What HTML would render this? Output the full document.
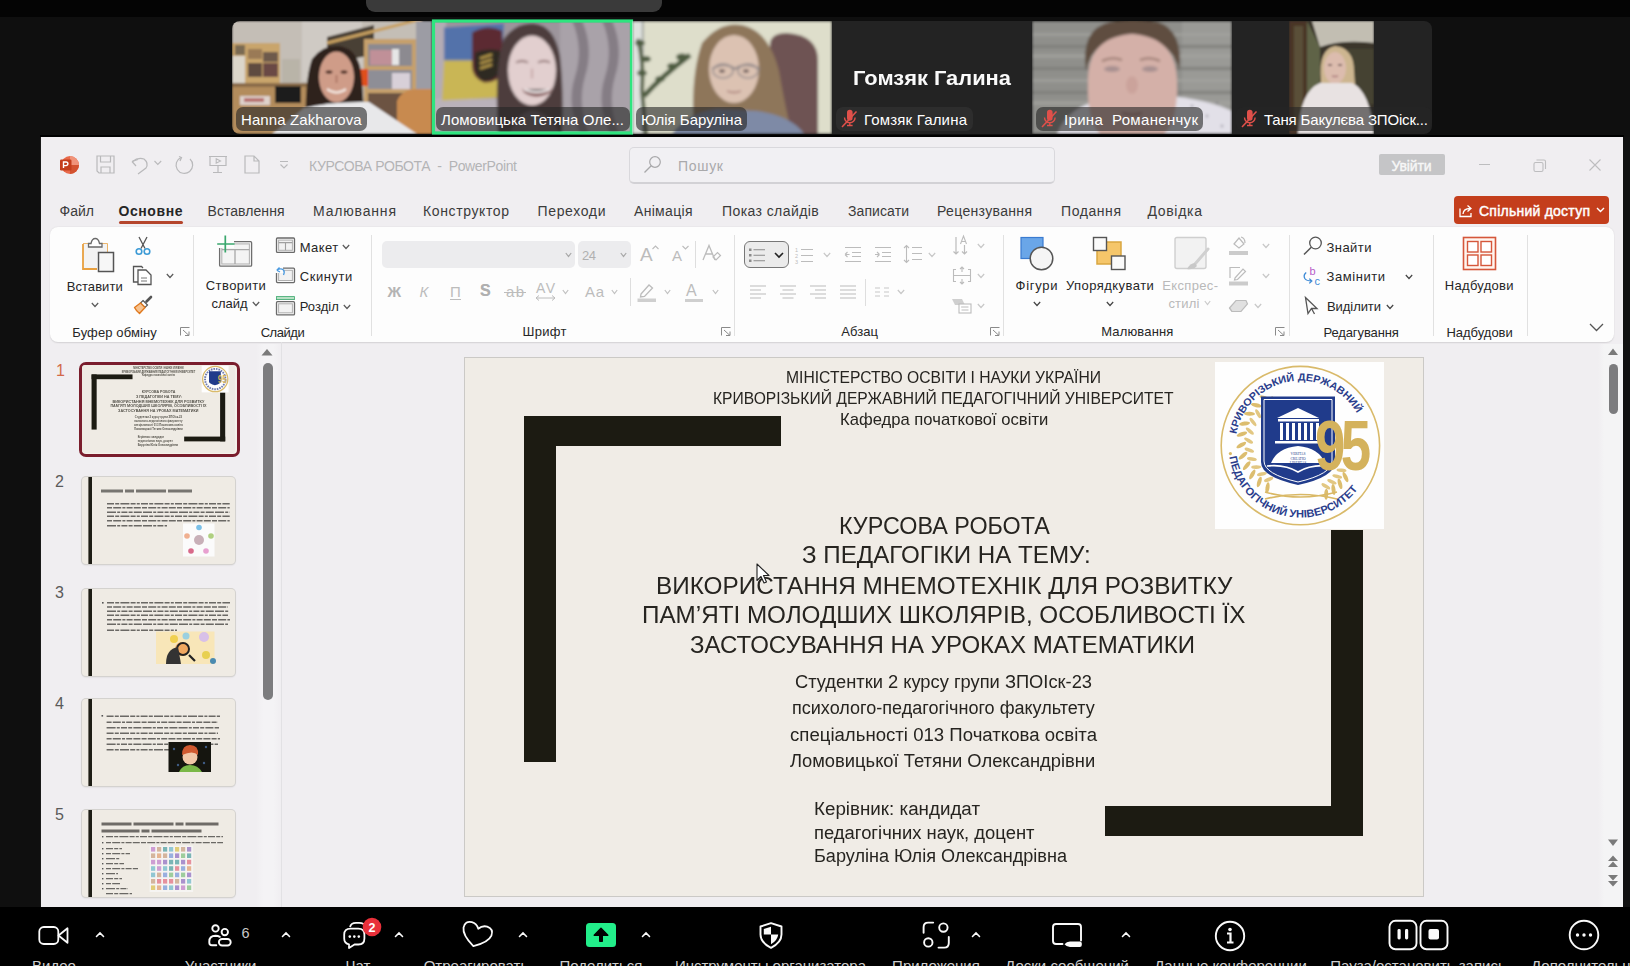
<!DOCTYPE html>
<html><head><meta charset="utf-8"><style>
*{margin:0;padding:0;box-sizing:border-box}
html,body{width:1630px;height:966px;overflow:hidden;background:#0f0f0f;position:relative}
.t{position:absolute;white-space:pre;line-height:1;font-family:'Liberation Sans',sans-serif}
svg{overflow:visible}
</style></head><body>
<div style="position:absolute;left:0px;top:0px;width:1630px;height:17px;background:#040404"></div><div style="position:absolute;left:366px;top:-10px;width:296px;height:22px;background:#3a3a3a;border-radius:9px"></div><svg style="position:absolute;left:232px;top:21px;" width="200" height="113" viewBox="0 0 200 113">
<defs><clipPath id="c1"><path d="M8 0H200V113H8A8 8 0 0 1 0 105V8A8 8 0 0 1 8 0Z"/></clipPath><filter id="b1" x="-20%" y="-20%" width="140%" height="140%"><feGaussianBlur stdDeviation="1.1"/></filter></defs>
<g clip-path="url(#c1)"><g filter="url(#b1)">
<rect width="200" height="113" fill="#c4beb6"/>
<rect x="70" y="0" width="60" height="60" fill="#cfcac4"/>
<rect x="0" y="22" width="48" height="43" fill="#c9a56c"/>
<rect x="0" y="35" width="13" height="30" fill="#dcd6ca"/>
<rect x="3" y="24" width="10" height="10" fill="#7a6a52"/>
<rect x="16" y="28" width="14" height="10" fill="#9a7a56"/><rect x="31" y="31" width="15" height="10" fill="#6e5a4c"/>
<rect x="16" y="42" width="14" height="14" fill="#5e4c40"/><rect x="31" y="42" width="15" height="14" fill="#6a4a44"/>
<rect x="50" y="38" width="18" height="27" fill="#b9b4a8"/>
<rect x="0" y="62" width="92" height="51" fill="#b38c5c"/>
<rect x="0" y="62" width="92" height="4" fill="#8a6c48"/>
<rect x="43" y="65" width="26" height="17" fill="#1c1c1c"/>
<rect x="8" y="75" width="30" height="9" fill="#ded2cc"/><rect x="12" y="77" width="20" height="4" fill="#b87070"/>
<path d="M95 16L142 4V34L95 42Z" fill="#4a4036"/>
<path d="M95 22L190 -2" stroke="#c8a060" stroke-width="3"/>
<rect x="132" y="18" width="52" height="95" fill="#c6a06c"/>
<rect x="136" y="23" width="44" height="22" fill="#8c8a90"/>
<rect x="138" y="29" width="22" height="15" fill="#c09098"/><rect x="160" y="28" width="7" height="16" fill="#e6e6e6"/>
<rect x="136" y="49" width="44" height="19" fill="#8e8e96"/>
<rect x="160" y="52" width="18" height="16" fill="#d8d0d8"/>
<rect x="136" y="72" width="44" height="41" fill="#6c5242"/>
<rect x="184" y="0" width="16" height="113" fill="#9c9ca4"/>
<rect x="124" y="48" width="12" height="17" fill="#e0501e"/>
<path d="M165 113V80Q170 68 185 68H200V113Z" fill="#c88a50"/>
<path d="M74 113Q72 60 80 38Q90 24 106 25Q122 26 128 45Q132 70 132 113Z" fill="#2e221e"/>
<ellipse cx="104.5" cy="56" rx="17.5" ry="25.5" fill="#cf9c88"/>
<ellipse cx="97" cy="51" rx="3.5" ry="1.8" fill="#5a3a30"/><ellipse cx="112" cy="51" rx="3.5" ry="1.8" fill="#5a3a30"/><path d="M104.5 54V62" stroke="#b07a68" stroke-width="2"/><path d="M95 68Q104.5 75 114 68" stroke="#f0e0d8" stroke-width="2.5" fill="none"/>
<path d="M40 113L72 87Q100 80 137 81L185 113Z" fill="#e8e8ea"/>
</g></g></svg><svg style="position:absolute;left:432px;top:21px;top:20px;height:114px" width="200" height="113" viewBox="0 0 200 113">
<defs><filter id="b2" x="-20%" y="-20%" width="140%" height="140%"><feGaussianBlur stdDeviation="1.6"/></filter><clipPath id="c2"><rect width="200" height="113"/></clipPath></defs>
<g clip-path="url(#c2)"><g filter="url(#b2)">
<rect width="200" height="113" fill="#9d959c"/>
<rect x="0" y="0" width="14" height="113" fill="#b4acb4"/>
<rect x="0" y="78" width="75" height="35" fill="#bab2ba"/>
<rect x="128" y="0" width="72" height="113" fill="#a9a2a9"/>
<path d="M140 0Q152 28 143 56Q134 84 148 113H157Q145 84 153 56Q162 28 150 0Z" fill="#857d85"/>
<path d="M170 0Q182 28 173 56Q164 84 178 113H187Q175 84 183 56Q192 28 180 0Z" fill="#857d85"/>
<path d="M12 7L72 3L70 40L12 40Z" fill="#5272aa"/>
<path d="M12 40L70 40L68 77L10 80Z" fill="#c9b654"/>
<path d="M40 12Q55 3 70 10L72 50Q65 63 52 62Q40 57 40 45Z" fill="#5c2c32"/>
<path d="M43 32Q55 27 68 30L68 52Q60 62 50 60Q43 55 43 45Z" fill="#2e2a24"/>
<path d="M48 38L60 34M48 43L60 39M48 48L60 44" stroke="#c8a850" stroke-width="2"/>
<path d="M66 113Q62 45 72 18Q84 2 102 3Q122 5 128 35Q132 70 130 113Z" fill="#4e3e3e"/>
<ellipse cx="100" cy="50" rx="24" ry="35" fill="#e2cfcf"/>
<path d="M84 42Q90 39 96 42M106 42Q112 39 118 42" stroke="#8a6a6a" stroke-width="1.8" fill="none"/><path d="M100 48V58" stroke="#c8a8a8" stroke-width="2"/><path d="M90 68Q104 78 120 68L118 72Q104 80 92 72Z" fill="#7a4a4a"/>
<path d="M92 69Q104 74 118 69" stroke="#f4eeee" stroke-width="2"/>
<path d="M78 113Q85 92 100 90Q118 92 128 113Z" fill="#6a5a60"/>
</g></g>
<rect x="1.5" y="0.5" width="198" height="112" fill="none" stroke="#2ee57f" stroke-width="3.2"/></svg><svg style="position:absolute;left:632px;top:21px;" width="200" height="113" viewBox="0 0 200 113">
<defs><filter id="b3" x="-20%" y="-20%" width="140%" height="140%"><feGaussianBlur stdDeviation="1.5"/></filter><clipPath id="c3"><rect width="200" height="113"/></clipPath></defs>
<g clip-path="url(#c3)"><g filter="url(#b3)">
<rect width="200" height="113" fill="#dedecb"/>
<rect x="0" y="0" width="12" height="113" fill="#dfe2de"/>
<rect x="10" y="0" width="1.5" height="113" fill="#8a8c88"/>
<path d="M6 18Q12 40 10 70L14 113" stroke="#586448" stroke-width="4" fill="none"/>
<path d="M12 75Q30 55 58 34" stroke="#4c5a3e" stroke-width="5" fill="none"/>
<g fill="#4e5c40"><ellipse cx="8" cy="22" rx="5" ry="3"/><ellipse cx="14" cy="38" rx="5" ry="3"/><ellipse cx="10" cy="52" rx="5" ry="3"/><ellipse cx="50" cy="36" rx="6" ry="3.5"/><ellipse cx="40" cy="45" rx="5" ry="3"/><ellipse cx="28" cy="58" rx="5" ry="3"/></g>
<path d="M138 113V24Q138 12 155 12Q186 14 186 40V113Z" fill="#6e5252"/>
<path d="M62 113Q58 55 70 22Q88 0 110 4Q137 10 147 50Q154 90 160 113Z" fill="#8e765a"/>
<ellipse cx="102" cy="48" rx="25" ry="34" fill="#dcc2b2"/>
<path d="M80 48Q92 40 103 48Q114 40 128 48" stroke="#8c8484" stroke-width="1.8" fill="none"/>
<ellipse cx="90" cy="50" rx="3" ry="1.8" fill="#6a5a58"/><ellipse cx="114" cy="50" rx="3" ry="1.8" fill="#6a5a58"/><path d="M95 70Q102 73 109 70" stroke="#b08880" stroke-width="1.8" fill="none"/><ellipse cx="91" cy="50" rx="10" ry="7" fill="none" stroke="#9a9090" stroke-width="1.5"/>
<ellipse cx="116" cy="50" rx="10" ry="7" fill="none" stroke="#9a9090" stroke-width="1.5"/>
<path d="M40 113Q55 92 85 88L125 90Q160 95 172 113Z" fill="#7e8aa6"/>
</g></g></svg><div style="position:absolute;left:832px;top:21px;width:200px;height:113px;background:#232323"></div><div class="t" style="left:852.50px;top:68.07px;font-family:'Liberation Sans';font-size:20px;font-weight:700;color:#fafafa;transform:scaleX(1.0941);transform-origin:0 0;">Гомзяк Галина</div><svg style="position:absolute;left:1032px;top:21px;" width="200" height="113" viewBox="0 0 200 113">
<defs><filter id="b5" x="-20%" y="-20%" width="140%" height="140%"><feGaussianBlur stdDeviation="1.8"/></filter><clipPath id="c5"><rect width="200" height="113"/></clipPath></defs>
<g clip-path="url(#c5)"><g filter="url(#b5)">
<rect width="200" height="113" fill="#8f8f8b"/>
<rect x="150" width="50" height="113" fill="#9a9a96"/>
<g fill="#a2a29e" opacity="0.8"><rect x="0" y="12" width="200" height="3"/><rect x="0" y="33" width="200" height="4"/><rect x="0" y="58" width="200" height="3"/><rect x="0" y="80" width="200" height="4"/></g>
<g fill="#7c7c78" opacity="0.8"><rect x="0" y="24" width="200" height="3"/><rect x="0" y="46" width="200" height="3"/><rect x="0" y="70" width="200" height="3"/></g>
<path d="M25 113Q35 84 80 76L130 74Q175 78 200 90V113Z" fill="#e2e0e8"/>
<path d="M54 50Q48 8 78 1Q100 -3 126 1Q152 10 147 50Q142 20 100 13Q60 18 54 50Z" fill="#5e4e40"/>
<path d="M56 62Q55 16 100 13Q145 16 145 62Q146 100 132 113H68Q55 100 56 62Z" fill="#d4b0a8"/>
<ellipse cx="80" cy="48" rx="8" ry="3" fill="#a89090"/><ellipse cx="118" cy="48" rx="8" ry="3" fill="#a89090"/>
<path d="M70 40Q80 35 90 39M108 39Q118 35 128 40" stroke="#9a7a70" stroke-width="2" fill="none"/>
<ellipse cx="100" cy="64" rx="6" ry="9" fill="#c89e96" opacity="0.7"/><path d="M90 92Q100 95 110 92" stroke="#a87a74" stroke-width="2" fill="none"/>
<g fill="#6a6a78" opacity="0.7"><circle cx="160" cy="85" r="1.2"/><circle cx="175" cy="95" r="1.2"/><circle cx="185" cy="82" r="1.2"/><circle cx="150" cy="100" r="1.2"/><circle cx="190" cy="105" r="1.2"/></g>
</g></g></svg><svg style="position:absolute;left:1232px;top:21px;" width="200" height="113" viewBox="0 0 200 113">
<defs><filter id="b6" x="-20%" y="-20%" width="140%" height="140%"><feGaussianBlur stdDeviation="1.0"/></filter><clipPath id="c6"><path d="M0 0H192A8 8 0 0 1 200 8V105A8 8 0 0 1 192 113H0Z"/></clipPath>
<clipPath id="c6v"><rect x="57" y="0" width="85" height="113"/></clipPath></defs>
<g clip-path="url(#c6)">
<rect width="200" height="113" fill="#232323"/>
<g clip-path="url(#c6v)"><g filter="url(#b6)">
<rect x="57" width="85" height="113" fill="#3a362c"/>
<path d="M80 0H142V22Q110 18 88 26Z" fill="#c2beb2"/>
<path d="M75 0L88 26L88 113H75Z" fill="#5e6446"/>
<rect x="57" y="0" width="18" height="113" fill="#4a3626"/>
<rect x="62" y="5" width="9" height="100" fill="#5a5038"/>
<rect x="110" y="28" width="32" height="55" fill="#444232"/>
<path d="M89 60Q86 28 103 25Q122 27 122 50L124 76L88 76Z" fill="#cdb690"/>
<ellipse cx="103" cy="47" rx="11" ry="16" fill="#dcbcae"/><path d="M96 44H100M106 44H110" stroke="#6a5050" stroke-width="1.3"/><path d="M100 55Q103 56 106 55" stroke="#b08080" stroke-width="1.5"/>
<path d="M66 113Q68 70 88 62L120 62Q138 70 142 113Z" fill="#e8e2e2"/>
</g></g></g></svg><div style="position:absolute;left:236px;top:107px;width:131px;height:24px;background:rgba(36,36,36,0.6);border-radius:7px"></div><div class="t" style="left:241.00px;top:111.60px;font-family:'Liberation Sans';font-size:15px;font-weight:400;color:#ffffff;letter-spacing:0.096px;">Hanna Zakharova</div><div style="position:absolute;left:436px;top:107px;width:194px;height:24px;background:rgba(36,36,36,0.6);border-radius:7px"></div><div class="t" style="left:441.00px;top:111.60px;font-family:'Liberation Sans';font-size:15px;font-weight:400;color:#ffffff;letter-spacing:0.041px;">Ломовицька Тетяна Оле...</div><div style="position:absolute;left:636px;top:107px;width:111px;height:24px;background:rgba(36,36,36,0.6);border-radius:7px"></div><div class="t" style="left:641.00px;top:111.60px;font-family:'Liberation Sans';font-size:15px;font-weight:400;color:#ffffff;letter-spacing:-0.009px;">Юлія Баруліна</div><div style="position:absolute;left:836px;top:107px;width:137px;height:24px;background:#2d2d2d;border-radius:7px"></div><svg style="position:absolute;left:840px;top:110px;" width="18" height="18" viewBox="0 0 18 18"><path d="M7 2.5a2.8 2.8 0 0 1 5.6 0V8a2.8 2.8 0 0 1-5.6 0Z" fill="#e0504a"/>
<path d="M4.5 7.5a5.3 5.3 0 0 0 10.6 0M9.8 13v2.5M7 15.5h5.6" stroke="#e0504a" stroke-width="1.4" fill="none"/>
<path d="M2 17L16.5 1.5" stroke="#e0504a" stroke-width="1.6"/></svg><div class="t" style="left:864.00px;top:111.60px;font-family:'Liberation Sans';font-size:15px;font-weight:400;color:#ffffff;letter-spacing:0.190px;">Гомзяк Галина</div><div style="position:absolute;left:1036px;top:107px;width:167px;height:24px;background:rgba(36,36,36,0.6);border-radius:7px"></div><svg style="position:absolute;left:1040px;top:110px;" width="18" height="18" viewBox="0 0 18 18"><path d="M7 2.5a2.8 2.8 0 0 1 5.6 0V8a2.8 2.8 0 0 1-5.6 0Z" fill="#e0504a"/>
<path d="M4.5 7.5a5.3 5.3 0 0 0 10.6 0M9.8 13v2.5M7 15.5h5.6" stroke="#e0504a" stroke-width="1.4" fill="none"/>
<path d="M2 17L16.5 1.5" stroke="#e0504a" stroke-width="1.6"/></svg><div class="t" style="left:1064.00px;top:111.60px;font-family:'Liberation Sans';font-size:15px;font-weight:400;color:#ffffff;letter-spacing:0.313px;">Ірина  Романенчук</div><div style="position:absolute;left:1236px;top:107px;width:196px;height:24px;background:rgba(36,36,36,0.6);border-radius:7px;border-radius:7px 7px 8px 7px"></div><svg style="position:absolute;left:1240px;top:110px;" width="18" height="18" viewBox="0 0 18 18"><path d="M7 2.5a2.8 2.8 0 0 1 5.6 0V8a2.8 2.8 0 0 1-5.6 0Z" fill="#e0504a"/>
<path d="M4.5 7.5a5.3 5.3 0 0 0 10.6 0M9.8 13v2.5M7 15.5h5.6" stroke="#e0504a" stroke-width="1.4" fill="none"/>
<path d="M2 17L16.5 1.5" stroke="#e0504a" stroke-width="1.6"/></svg><div class="t" style="left:1264.00px;top:111.60px;font-family:'Liberation Sans';font-size:15px;font-weight:400;color:#ffffff;letter-spacing:-0.165px;">Таня Бакулєва ЗПОіск...</div><div style="position:absolute;left:40px;top:135px;width:1584px;height:2px;background:#000"></div><div style="position:absolute;left:41px;top:137px;width:1582px;height:770px;background:#f0eef1"></div><div style="position:absolute;left:40px;top:137px;width:1px;height:770px;background:#1a1a1a"></div><svg style="position:absolute;left:59px;top:155px;" width="20" height="20" viewBox="0 0 20 20">
<circle cx="11" cy="10" r="9" fill="#e8694a"/>
<path d="M11 1A9 9 0 0 1 20 10H11Z" fill="#f0937a"/>
<path d="M11 10H20A9 9 0 0 1 11 19Z" fill="#d35230"/>
<rect x="1" y="4.5" width="11.5" height="11" rx="1.2" fill="#c43e1c"/>
<path d="M4.5 13V7h2.6a1.8 1.8 0 0 1 0 3.6H4.5" stroke="#fff" stroke-width="1.4" fill="none"/></svg><svg style="position:absolute;left:96px;top:155px;" width="20" height="20" viewBox="0 0 20 20"><path d="M1 1H18V18H3L1 16Z" fill="none" stroke="#b9b9bb" stroke-width="1.2"/>
<path d="M4.5 1V7H14.5V1M5 18V12H14V18" fill="none" stroke="#b9b9bb" stroke-width="1.2"/></svg><svg style="position:absolute;left:130px;top:155px;" width="22" height="20" viewBox="0 0 22 20"><path d="M2 6.5L6 11M2 6.5L8 4.5" stroke="#b9b9bb" stroke-width="1.2" fill="none"/>
<path d="M2.5 6.5Q8 2 14 4Q19 8 16 13L8 19" stroke="#b9b9bb" stroke-width="1.2" fill="none"/></svg><svg style="position:absolute;left:154px;top:160px;" width="8" height="6" viewBox="0 0 8 6"><path d="M0.5 1L3.8 4.5L7.2 1" stroke="#b9b9bb" stroke-width="1.1" fill="none"/></svg><svg style="position:absolute;left:174px;top:155px;" width="22" height="20" viewBox="0 0 22 20"><path d="M7 2.5A8.3 8.3 0 1 0 16 4" stroke="#b9b9bb" stroke-width="1.2" fill="none"/>
<path d="M5 1.5L7.5 2.5L6 6" stroke="#b9b9bb" stroke-width="1.2" fill="none"/></svg><svg style="position:absolute;left:208px;top:155px;" width="20" height="20" viewBox="0 0 20 20"><path d="M1 1.5H19M2 1.5V10.5H18V1.5M10 10.5V17M5 17.5H14" stroke="#b9b9bb" stroke-width="1.2" fill="none"/>
<path d="M8.2 3.8L12.5 6L8.2 8.2Z" fill="none" stroke="#b9b9bb" stroke-width="1.1"/></svg><svg style="position:absolute;left:244px;top:155px;" width="18" height="20" viewBox="0 0 18 20"><path d="M1 1H10L15 6V18H1Z M10 1V6H15" stroke="#b9b9bb" stroke-width="1.2" fill="none"/></svg><svg style="position:absolute;left:279px;top:160px;" width="10" height="10" viewBox="0 0 10 10"><path d="M1 1.5H9M1.5 4.5L5 8L8.5 4.5" stroke="#b9b9bb" stroke-width="1.1" fill="none"/></svg><div class="t" style="left:309.00px;top:158.55px;font-family:'Liberation Sans';font-size:14px;font-weight:400;color:#b4b4b6;letter-spacing:-0.367px;">КУРСОВА РОБОТА  -  PowerPoint</div><div style="position:absolute;left:628.5px;top:146.5px;width:426px;height:37px;border:1px solid #d9d8dc;border-bottom:2px solid #d2d1d5;border-radius:5px;background:#f1f0f3"></div><svg style="position:absolute;left:643px;top:155px;" width="20" height="20" viewBox="0 0 20 20"><circle cx="12" cy="7" r="5.3" stroke="#a8a8aa" stroke-width="1.2" fill="none"/><path d="M8.2 10.8L1.5 17.5" stroke="#a8a8aa" stroke-width="1.3"/></svg><div class="t" style="left:678.00px;top:158.75px;font-family:'Liberation Sans';font-size:14px;font-weight:400;color:#a9a9ab;letter-spacing:0.695px;">Пошук</div><div style="position:absolute;left:1379px;top:153.5px;width:66px;height:21.5px;background:#c5c5c7;border-radius:2px"></div><div class="t" style="left:1391.50px;top:158.65px;font-family:'Liberation Sans';font-size:14px;font-weight:400;color:#f7f7f7;letter-spacing:-0.144px;-webkit-text-stroke:0.4px #f7f7f7">Увійти</div><div style="position:absolute;left:1478.5px;top:163.6px;width:11.5px;height:1.1px;background:#bdbdbf"></div><svg style="position:absolute;left:1532px;top:157px;" width="16" height="16" viewBox="0 0 16 16"><rect x="2" y="5.5" width="9" height="9" rx="1.5" fill="none" stroke="#bdbdbf" stroke-width="1.1"/><path d="M4.5 3H12a1.5 1.5 0 0 1 1.5 1.5V12" fill="none" stroke="#bdbdbf" stroke-width="1.1"/></svg><svg style="position:absolute;left:1588px;top:158px;" width="14" height="14" viewBox="0 0 14 14"><path d="M1.5 1.5L12.5 12.5M12.5 1.5L1.5 12.5" stroke="#bdbdbf" stroke-width="1.1"/></svg><div class="t" style="left:59.50px;top:203.85px;font-family:'Liberation Sans';font-size:14px;font-weight:400;color:#3b3b3b;letter-spacing:0.026px;">Файл</div><div class="t" style="left:118.50px;top:203.85px;font-family:'Liberation Sans';font-size:14px;font-weight:700;color:#262626;letter-spacing:0.576px;">Основне</div><div class="t" style="left:207.50px;top:203.85px;font-family:'Liberation Sans';font-size:14px;font-weight:400;color:#3b3b3b;letter-spacing:0.056px;">Вставлення</div><div class="t" style="left:313.00px;top:203.85px;font-family:'Liberation Sans';font-size:14px;font-weight:400;color:#3b3b3b;letter-spacing:0.826px;">Малювання</div><div class="t" style="left:423.00px;top:203.85px;font-family:'Liberation Sans';font-size:14px;font-weight:400;color:#3b3b3b;letter-spacing:0.617px;">Конструктор</div><div class="t" style="left:537.50px;top:203.85px;font-family:'Liberation Sans';font-size:14px;font-weight:400;color:#3b3b3b;letter-spacing:0.652px;">Переходи</div><div class="t" style="left:634.00px;top:203.85px;font-family:'Liberation Sans';font-size:14px;font-weight:400;color:#3b3b3b;letter-spacing:0.312px;">Анімація</div><div class="t" style="left:722.00px;top:203.85px;font-family:'Liberation Sans';font-size:14px;font-weight:400;color:#3b3b3b;letter-spacing:0.415px;">Показ слайдів</div><div class="t" style="left:848.00px;top:203.85px;font-family:'Liberation Sans';font-size:14px;font-weight:400;color:#3b3b3b;letter-spacing:0.092px;">Записати</div><div class="t" style="left:937.00px;top:203.85px;font-family:'Liberation Sans';font-size:14px;font-weight:400;color:#3b3b3b;letter-spacing:0.339px;">Рецензування</div><div class="t" style="left:1061.00px;top:203.85px;font-family:'Liberation Sans';font-size:14px;font-weight:400;color:#3b3b3b;letter-spacing:0.576px;">Подання</div><div class="t" style="left:1147.40px;top:203.85px;font-family:'Liberation Sans';font-size:14px;font-weight:400;color:#3b3b3b;letter-spacing:0.704px;">Довідка</div><div style="position:absolute;left:118.5px;top:221px;width:64.5px;height:3px;background:#b5452c;border-radius:1.5px"></div><div style="position:absolute;left:1454px;top:196.4px;width:155px;height:27.2px;background:#c43e1c;border-radius:4px"></div><svg style="position:absolute;left:1458px;top:202px;" width="17" height="16" viewBox="0 0 17 16"><path d="M2 6.5V14.5H13V11" stroke="#fff" stroke-width="1.3" fill="none"/>
<path d="M5 12Q5.5 6.5 12 6.5M9.5 3.5L13 6.5L9.5 9.5" stroke="#fff" stroke-width="1.3" fill="none"/></svg><div class="t" style="left:1479.00px;top:203.65px;font-family:'Liberation Sans';font-size:14px;font-weight:400;color:#ffffff;letter-spacing:0.240px;-webkit-text-stroke:0.45px #fff">Спільний доступ</div><svg style="position:absolute;left:1596px;top:207px;" width="9" height="6" viewBox="0 0 9 6"><path d="M1 1L4.5 4.5L8 1" stroke="#fff" stroke-width="1.4" fill="none"/></svg><div style="position:absolute;left:50px;top:227px;width:1564px;height:115px;background:#fdfdfd;border-radius:8px;box-shadow:0 0.5px 1.5px rgba(0,0,0,0.12)"></div><div class="t" style="left:72.30px;top:325.60px;font-family:'Liberation Sans';font-size:13px;font-weight:400;color:#262626;letter-spacing:0.112px;">Буфер обміну</div><svg style="position:absolute;left:180px;top:327px;" width="10" height="9" viewBox="0 0 10 9"><path d="M0.5 8.5V0.5H9.5M3 3L9 8.5M9 4.5V8.5H5" stroke="#8a8a8a" stroke-width="1" fill="none"/></svg><div style="position:absolute;left:193.3px;top:234.5px;width:1px;height:101.0px;background:#e1e1e1"></div><div class="t" style="left:260.70px;top:325.60px;font-family:'Liberation Sans';font-size:13px;font-weight:400;color:#262626;letter-spacing:-0.463px;">Слайди</div><div style="position:absolute;left:371.2px;top:234.5px;width:1px;height:101.0px;background:#e1e1e1"></div><div class="t" style="left:522.50px;top:325.20px;font-family:'Liberation Sans';font-size:13px;font-weight:400;color:#262626;letter-spacing:0.305px;">Шрифт</div><svg style="position:absolute;left:720.5px;top:327px;" width="10" height="9" viewBox="0 0 10 9"><path d="M0.5 8.5V0.5H9.5M3 3L9 8.5M9 4.5V8.5H5" stroke="#8a8a8a" stroke-width="1" fill="none"/></svg><div style="position:absolute;left:734px;top:234.5px;width:1px;height:101.0px;background:#e1e1e1"></div><div class="t" style="left:841.30px;top:324.80px;font-family:'Liberation Sans';font-size:13px;font-weight:400;color:#262626;letter-spacing:0.058px;">Абзац</div><svg style="position:absolute;left:989.5px;top:327px;" width="10" height="9" viewBox="0 0 10 9"><path d="M0.5 8.5V0.5H9.5M3 3L9 8.5M9 4.5V8.5H5" stroke="#8a8a8a" stroke-width="1" fill="none"/></svg><div style="position:absolute;left:1002.8px;top:234.5px;width:1px;height:101.0px;background:#e1e1e1"></div><div class="t" style="left:1101.20px;top:325.40px;font-family:'Liberation Sans';font-size:13px;font-weight:400;color:#262626;letter-spacing:0.158px;">Малювання</div><svg style="position:absolute;left:1275px;top:327px;" width="10" height="9" viewBox="0 0 10 9"><path d="M0.5 8.5V0.5H9.5M3 3L9 8.5M9 4.5V8.5H5" stroke="#8a8a8a" stroke-width="1" fill="none"/></svg><div style="position:absolute;left:1289px;top:234.5px;width:1px;height:101.0px;background:#e1e1e1"></div><div class="t" style="left:1323.40px;top:325.60px;font-family:'Liberation Sans';font-size:13px;font-weight:400;color:#262626;letter-spacing:-0.100px;">Редагування</div><div style="position:absolute;left:1432.9px;top:234.5px;width:1px;height:101.0px;background:#e1e1e1"></div><div class="t" style="left:1446.40px;top:325.60px;font-family:'Liberation Sans';font-size:13px;font-weight:400;color:#262626;letter-spacing:-0.003px;">Надбудови</div><div style="position:absolute;left:1526.8px;top:234.5px;width:1px;height:101.0px;background:#e1e1e1"></div><svg style="position:absolute;left:1589px;top:323px;" width="15" height="9" viewBox="0 0 15 9"><path d="M1 1L7.5 7.5L14 1" stroke="#555" stroke-width="1.3" fill="none"/></svg><svg style="position:absolute;left:80px;top:236px;" width="36" height="38" viewBox="0 0 36 38">
<path d="M3 8H8M22 8H27V24" stroke="#e8a040" stroke-width="1.6" fill="none"/>
<path d="M3 8V33H17V18H27V8H3Z" fill="#f3f3f3"/><path d="M3 8V33H17" stroke="#e8a040" stroke-width="1.8" fill="none"/>
<path d="M8.5 11V7.5H11Q12 2.5 15.3 2.5Q18.5 2.5 19.5 7.5H22V11Z" fill="#fff" stroke="#6a6a6a" stroke-width="1.3"/>
<rect x="18.5" y="16.5" width="15" height="19" fill="#f7f7f7" stroke="#555" stroke-width="1.5"/></svg><div class="t" style="left:66.70px;top:280.30px;font-family:'Liberation Sans';font-size:13px;font-weight:400;color:#262626;letter-spacing:0.058px;">Вставити</div><svg style="position:absolute;left:91.0px;top:301.5px;" width="8" height="6" viewBox="0 0 8 6"><path d="M0.8 1L4.0 4.5L7.2 1" stroke="#5a5a5a" stroke-width="1.2" fill="none"/></svg><svg style="position:absolute;left:134px;top:236px;" width="18" height="20" viewBox="0 0 18 20"><path d="M5 1L11 12.5M13 1L7 12.5" stroke="#555" stroke-width="1.3"/>
<circle cx="5" cy="15.5" r="2.8" fill="none" stroke="#3d9bd6" stroke-width="1.6"/>
<circle cx="13" cy="15.5" r="2.8" fill="none" stroke="#3d9bd6" stroke-width="1.6"/></svg><svg style="position:absolute;left:132px;top:265px;" width="22" height="21" viewBox="0 0 22 21"><path d="M6 17H1.5V1.5H9.5L11 3" stroke="#555" stroke-width="1.3" fill="none"/>
<path d="M6 5H14L19 10V19.5H6Z" fill="#fff" stroke="#555" stroke-width="1.3"/>
<path d="M9 13H15M9 16H15" stroke="#777" stroke-width="1"/></svg><svg style="position:absolute;left:166.4px;top:273px;" width="8" height="6" viewBox="0 0 8 6"><path d="M0.8 1L4.0 4.5L7.2 1" stroke="#5a5a5a" stroke-width="1.2" fill="none"/></svg><svg style="position:absolute;left:133px;top:295px;" width="20" height="20" viewBox="0 0 20 20"><path d="M18 2L13.5 6.5" stroke="#555" stroke-width="2.6" stroke-linecap="round"/>
<path d="M10 5.5L14.5 10L12 12.5L7.5 8Z" fill="#fff" stroke="#555" stroke-width="1.2"/>
<path d="M7.5 8L12 12.5L6.5 18.5Q3 15.5 1.5 12.5Z" fill="#f7c390" stroke="#e07a20" stroke-width="1.4" stroke-linejoin="round"/></svg><svg style="position:absolute;left:215px;top:234px;" width="40" height="35" viewBox="0 0 40 35"><rect x="4.6" y="7.7" width="32" height="24.5" rx="1" fill="#fafafa" stroke="#6e6e6e" stroke-width="1.3"/>
<rect x="6.8" y="9.9" width="27.6" height="20.1" fill="#f4f4f4" stroke="#b4b4b4" stroke-width="1.1"/>
<path d="M7 15.6H34.3M20 15.6V30" stroke="#a8a8a8" stroke-width="1.3"/>
<rect x="2" y="6.5" width="17" height="7.5" fill="#fdfdfd"/>
<path d="M10.3 1.6V18.4M2.2 10H19.5" stroke="#3aa76d" stroke-width="1.7"/></svg><div class="t" style="left:205.80px;top:278.70px;font-family:'Liberation Sans';font-size:13px;font-weight:400;color:#262626;letter-spacing:0.422px;">Створити</div><div class="t" style="left:211.50px;top:297.40px;font-family:'Liberation Sans';font-size:13px;font-weight:400;color:#262626;letter-spacing:-0.043px;">слайд</div><svg style="position:absolute;left:251.5px;top:301px;" width="8" height="6" viewBox="0 0 8 6"><path d="M0.8 1L4.0 4.5L7.2 1" stroke="#5a5a5a" stroke-width="1.2" fill="none"/></svg><svg style="position:absolute;left:275px;top:236px;" width="21" height="18" viewBox="0 0 21 18"><rect x="1.5" y="2" width="18" height="14.4" rx="1" fill="#fafafa" stroke="#6a6a6a" stroke-width="1.3"/>
<rect x="3.6" y="4.1" width="13.8" height="10.2" fill="#f2f2f2" stroke="#b0b0b0" stroke-width="1"/>
<path d="M3.6 6.6H17.4M10.5 6.6V14.3" stroke="#a0a0a0" stroke-width="1.1"/></svg><div class="t" style="left:299.70px;top:240.70px;font-family:'Liberation Sans';font-size:13px;font-weight:400;color:#262626;letter-spacing:0.426px;">Макет</div><svg style="position:absolute;left:342.0px;top:243.5px;" width="8" height="6" viewBox="0 0 8 6"><path d="M0.8 1L4.0 4.5L7.2 1" stroke="#5a5a5a" stroke-width="1.2" fill="none"/></svg><svg style="position:absolute;left:275px;top:266px;" width="21" height="18" viewBox="0 0 21 18"><rect x="1.5" y="2.2" width="18" height="14.4" rx="1" fill="#fafafa" stroke="#6a6a6a" stroke-width="1.3"/>
<rect x="3.6" y="4.3" width="13.8" height="10.2" fill="#f2f2f2" stroke="#b0b0b0" stroke-width="1"/>
<rect x="0" y="0" width="8" height="7" fill="#fdfdfd"/>
<path d="M2 4.2Q5.5 1.5 8.5 4Q10 6 8.5 9M1.8 4.3L4.5 1.5M1.8 4.3L5 6" stroke="#4a9ae0" stroke-width="1.3" fill="none"/></svg><div class="t" style="left:299.70px;top:270.30px;font-family:'Liberation Sans';font-size:13px;font-weight:400;color:#262626;letter-spacing:0.561px;">Скинути</div><svg style="position:absolute;left:275px;top:295px;" width="21" height="21" viewBox="0 0 21 21"><rect x="1.5" y="1.6" width="18" height="3" fill="#b8e0c4" stroke="#3aa76d" stroke-width="0.8"/>
<rect x="1.5" y="6.7" width="18" height="13.2" rx="1" fill="#fafafa" stroke="#6a6a6a" stroke-width="1.3"/>
<rect x="3.6" y="8.8" width="13.8" height="9" fill="#f2f2f2" stroke="#b0b0b0" stroke-width="1"/></svg><div class="t" style="left:299.70px;top:300.00px;font-family:'Liberation Sans';font-size:13px;font-weight:400;color:#262626;letter-spacing:0.056px;">Розділ</div><svg style="position:absolute;left:342.5px;top:304px;" width="8" height="6" viewBox="0 0 8 6"><path d="M0.8 1L4.0 4.5L7.2 1" stroke="#5a5a5a" stroke-width="1.2" fill="none"/></svg><div style="position:absolute;left:381.8px;top:241.3px;width:193.6px;height:26.8px;background:#ececee;border-radius:5px"></div><svg style="position:absolute;left:564.5px;top:252px;" width="7" height="6" viewBox="0 0 7 6"><path d="M0.8 1L3.5 4.5L6.2 1" stroke="#a8a8a8" stroke-width="1.2" fill="none"/></svg><div style="position:absolute;left:578.4px;top:241.3px;width:53px;height:26.8px;background:#ececee;border-radius:5px"></div><div class="t" style="left:582.00px;top:249.00px;font-family:'Liberation Sans';font-size:13px;font-weight:400;color:#b0b0b0;letter-spacing:-0.469px;">24</div><svg style="position:absolute;left:620.0px;top:252px;" width="7" height="6" viewBox="0 0 7 6"><path d="M0.8 1L3.5 4.5L6.2 1" stroke="#a8a8a8" stroke-width="1.2" fill="none"/></svg><div class="t" style="left:640.00px;top:244.92px;font-family:'Liberation Sans';font-size:19px;font-weight:400;color:#bcbcbc;">A</div><svg style="position:absolute;left:652px;top:245px;" width="7" height="5" viewBox="0 0 7 5"><path d="M0.5 4L3.5 1L6.5 4" stroke="#bcbcbc" stroke-width="1.1" fill="none"/></svg><div class="t" style="left:672.00px;top:248.30px;font-family:'Liberation Sans';font-size:15px;font-weight:400;color:#bcbcbc;">A</div><svg style="position:absolute;left:682px;top:245px;" width="7" height="5" viewBox="0 0 7 5"><path d="M0.5 1L3.5 4L6.5 1" stroke="#bcbcbc" stroke-width="1.1" fill="none"/></svg><div style="position:absolute;left:694.5px;top:241px;width:1px;height:27px;background:#dedede"></div><svg style="position:absolute;left:702px;top:244px;" width="20" height="19" viewBox="0 0 20 19"><path d="M1 16L7 1.5L13 16M3.5 10H10.5" stroke="#bcbcbc" stroke-width="1.3" fill="none"/><path d="M11 13L15.5 8.5L18.5 11.5L14 16Z" fill="none" stroke="#bcbcbc" stroke-width="1.2"/></svg><div class="t" style="left:387.50px;top:283.80px;font-family:'Liberation Sans';font-size:15px;font-weight:700;color:#b4b4b4;">Ж</div><div class="t" style="left:419.50px;top:283.80px;font-family:'Liberation Sans';font-size:15px;font-weight:400;color:#bcbcbc;font-style:italic">К</div><div class="t" style="left:450.00px;top:283.80px;font-family:'Liberation Sans';font-size:15px;font-weight:400;color:#bcbcbc;">П</div><div style="position:absolute;left:450px;top:298.5px;width:10.5px;height:1.2px;background:#bcbcbc"></div><div class="t" style="left:480.00px;top:282.96px;font-family:'Liberation Sans';font-size:16px;font-weight:700;color:#b0b0b0;text-shadow:0 0 0.6px #bbb">S</div><div class="t" style="left:506.00px;top:283.80px;font-family:'Liberation Sans';font-size:15px;font-weight:400;color:#bcbcbc;letter-spacing:1.312px;">ab</div><div style="position:absolute;left:504px;top:292px;width:22px;height:1.1px;background:#bcbcbc"></div><div class="t" style="left:536.00px;top:281.15px;font-family:'Liberation Sans';font-size:14px;font-weight:400;color:#bcbcbc;letter-spacing:1.359px;">AV</div><svg style="position:absolute;left:535px;top:294px;" width="22" height="8" viewBox="0 0 22 8"><path d="M1 4H20M1 4L4 1.5M1 4L4 6.5M20 4L17 1.5M20 4L17 6.5" stroke="#bcbcbc" stroke-width="1" fill="none"/></svg><svg style="position:absolute;left:561.5px;top:288.5px;" width="7" height="6" viewBox="0 0 7 6"><path d="M0.8 1L3.5 4.5L6.2 1" stroke="#c0c0c0" stroke-width="1.2" fill="none"/></svg><div class="t" style="left:585.00px;top:284.30px;font-family:'Liberation Sans';font-size:15px;font-weight:400;color:#bcbcbc;letter-spacing:0.641px;">Aa</div><svg style="position:absolute;left:610.5px;top:288.5px;" width="7" height="6" viewBox="0 0 7 6"><path d="M0.8 1L3.5 4.5L6.2 1" stroke="#c0c0c0" stroke-width="1.2" fill="none"/></svg><div style="position:absolute;left:630px;top:278px;width:1px;height:27.6px;background:#dedede"></div><svg style="position:absolute;left:636px;top:282px;" width="22" height="20" viewBox="0 0 22 20"><path d="M5 12L13 3L16.5 6L8.5 14.5L4.5 15Z" fill="none" stroke="#bcbcbc" stroke-width="1.3"/><rect x="1.5" y="16.5" width="18.5" height="3.5" fill="#cfcfcf"/></svg><svg style="position:absolute;left:664.3px;top:288.5px;" width="7" height="6" viewBox="0 0 7 6"><path d="M0.8 1L3.5 4.5L6.2 1" stroke="#c0c0c0" stroke-width="1.2" fill="none"/></svg><div class="t" style="left:686.00px;top:283.46px;font-family:'Liberation Sans';font-size:16px;font-weight:400;color:#bcbcbc;">A</div><div style="position:absolute;left:684.5px;top:298.5px;width:18.5px;height:3.5px;background:#cfcfcf"></div><svg style="position:absolute;left:712.0px;top:288.5px;" width="7" height="6" viewBox="0 0 7 6"><path d="M0.8 1L3.5 4.5L6.2 1" stroke="#c0c0c0" stroke-width="1.2" fill="none"/></svg><div style="position:absolute;left:744px;top:241.3px;width:44.8px;height:27px;background:#ebebeb;border:1.3px solid #777;border-radius:6px"></div><svg style="position:absolute;left:748px;top:247px;" width="20" height="16" viewBox="0 0 20 16"><path d="M1 1.5h2.5v2.5H1zM1 7h2.5v2.5H1zM1 12.5h2.5v2.5H1z" fill="#8a8a8a"/><path d="M5.5 2.7H17M5.5 8.2H17M5.5 13.7H17" stroke="#8a8a8a" stroke-width="1.1"/></svg><svg style="position:absolute;left:774px;top:252px;" width="10" height="7" viewBox="0 0 10 7"><path d="M1 1L5 5L9 1" stroke="#222" stroke-width="1.6" fill="none"/></svg><svg style="position:absolute;left:795px;top:246px;" width="20" height="18" viewBox="0 0 20 18"><text x="0" y="6" font-size="5.5" fill="#bcbcbc" font-family="Liberation Sans">1</text><text x="0" y="12" font-size="5.5" fill="#bcbcbc" font-family="Liberation Sans">2</text><text x="0" y="17.5" font-size="5.5" fill="#bcbcbc" font-family="Liberation Sans">3</text><path d="M6 3.5H18M6 9.5H18M6 15.5H18" stroke="#bcbcbc" stroke-width="1.1"/></svg><svg style="position:absolute;left:823.0px;top:252px;" width="8" height="6" viewBox="0 0 8 6"><path d="M0.8 1L4.0 4.5L7.2 1" stroke="#c8c8c8" stroke-width="1.2" fill="none"/></svg><svg style="position:absolute;left:844px;top:246px;" width="18" height="18" viewBox="0 0 18 18"><path d="M1 1.5H17M8 6.5H17M8 10.5H17M1 15.5H17M5.5 8.5H1M1 8.5L3.5 6M1 8.5L3.5 11" stroke="#bcbcbc" stroke-width="1.1" fill="none"/></svg><svg style="position:absolute;left:874px;top:246px;" width="18" height="18" viewBox="0 0 18 18"><path d="M1 1.5H17M8 6.5H17M8 10.5H17M1 15.5H17M1 8.5H5.5M5.5 8.5L3 6M5.5 8.5L3 11" stroke="#bcbcbc" stroke-width="1.1" fill="none"/></svg><svg style="position:absolute;left:903px;top:244px;" width="20" height="20" viewBox="0 0 20 20"><path d="M3.5 1.5V18.5M1 4L3.5 1.5L6 4M1 16L3.5 18.5L6 16M9 3.5H19M9 9.5H19M9 15.5H19" stroke="#bcbcbc" stroke-width="1.1" fill="none"/></svg><svg style="position:absolute;left:928.4px;top:252px;" width="8" height="6" viewBox="0 0 8 6"><path d="M0.8 1L4.0 4.5L7.2 1" stroke="#c8c8c8" stroke-width="1.2" fill="none"/></svg><svg style="position:absolute;left:953px;top:235px;" width="20" height="21" viewBox="0 0 20 21"><path d="M3 2V19M0.5 16.5L3 19L5.5 16.5M11.5 10V19M9 16.5L11.5 19L14 16.5" stroke="#bcbcbc" stroke-width="1.2" fill="none"/><path d="M7.5 9L10.5 1L13.5 9M8.5 6.5H12.5" stroke="#bcbcbc" stroke-width="1.1" fill="none"/></svg><svg style="position:absolute;left:977.0px;top:243px;" width="8" height="6" viewBox="0 0 8 6"><path d="M0.8 1L4.0 4.5L7.2 1" stroke="#c8c8c8" stroke-width="1.2" fill="none"/></svg><svg style="position:absolute;left:952px;top:266px;" width="20" height="19" viewBox="0 0 20 19"><path d="M4 3.5H1.5V15.5H4M16 3.5H18.5V15.5H16M2 9.5H18M10 1V6M8 3L10 1L12 3M10 18V13M8 16L10 18L12 16" stroke="#bcbcbc" stroke-width="1.1" fill="none"/></svg><svg style="position:absolute;left:977.0px;top:273px;" width="8" height="6" viewBox="0 0 8 6"><path d="M0.8 1L4.0 4.5L7.2 1" stroke="#c8c8c8" stroke-width="1.2" fill="none"/></svg><svg style="position:absolute;left:951px;top:298px;" width="22" height="16" viewBox="0 0 22 16"><path d="M1 1H11L14 7H4Z" fill="#cfcfcf"/><rect x="8" y="6" width="12" height="9" fill="#fff" stroke="#bcbcbc" stroke-width="1.1"/><path d="M10.5 9H17.5M10.5 12H17.5M10 9H10.5" stroke="#bcbcbc" stroke-width="1"/></svg><svg style="position:absolute;left:977.0px;top:303px;" width="8" height="6" viewBox="0 0 8 6"><path d="M0.8 1L4.0 4.5L7.2 1" stroke="#c8c8c8" stroke-width="1.2" fill="none"/></svg><svg style="position:absolute;left:749.8px;top:284.5px;" width="17" height="15" viewBox="0 0 17 15"><path d="M0 1H16M0 5H11M0 9H16M0 13H11" stroke="#bcbcbc" stroke-width="1.1"/></svg><svg style="position:absolute;left:779.8px;top:284.5px;" width="17" height="15" viewBox="0 0 17 15"><path d="M0 1H16M2.5 5H13.5M0 9H16M2.5 13H13.5" stroke="#bcbcbc" stroke-width="1.1"/></svg><svg style="position:absolute;left:810px;top:284.5px;" width="17" height="15" viewBox="0 0 17 15"><path d="M0 1H16M5 5H16M0 9H16M5 13H16" stroke="#bcbcbc" stroke-width="1.1"/></svg><svg style="position:absolute;left:840px;top:284.5px;" width="17" height="15" viewBox="0 0 17 15"><path d="M0 1H16M0 5H16M0 9H16M0 13H16" stroke="#bcbcbc" stroke-width="1.1"/></svg><div style="position:absolute;left:865px;top:279px;width:1px;height:27px;background:#dedede"></div><svg style="position:absolute;left:874.5px;top:287px;" width="15" height="10" viewBox="0 0 15 10"><path d="M0 1H5M0 5H5M0 9H5M9 1H14M9 5H14M9 9H14" stroke="#c8c8c8" stroke-width="1.1"/></svg><svg style="position:absolute;left:897.0px;top:289px;" width="8" height="6" viewBox="0 0 8 6"><path d="M0.8 1L4.0 4.5L7.2 1" stroke="#c8c8c8" stroke-width="1.2" fill="none"/></svg><svg style="position:absolute;left:1019px;top:236px;" width="36" height="36" viewBox="0 0 36 36"><rect x="2" y="1.5" width="22" height="21" fill="#6aa6e8" stroke="#3a7bd0" stroke-width="1.2"/>
<circle cx="22.5" cy="22.5" r="11.3" fill="#f5f5f5" stroke="#555" stroke-width="1.5"/></svg><div class="t" style="left:1015.60px;top:279.30px;font-family:'Liberation Sans';font-size:13px;font-weight:400;color:#262626;letter-spacing:0.728px;">Фігури</div><svg style="position:absolute;left:1032.8px;top:300.5px;" width="8" height="6" viewBox="0 0 8 6"><path d="M0.8 1L4.0 4.5L7.2 1" stroke="#444" stroke-width="1.2" fill="none"/></svg><svg style="position:absolute;left:1092px;top:236px;" width="36" height="36" viewBox="0 0 36 36"><rect x="5" y="6" width="24" height="22" fill="#f5c66a" stroke="#d9a640" stroke-width="1.5"/>
<rect x="1.5" y="1.5" width="13" height="13" fill="#fafafa" stroke="#555" stroke-width="1.4"/>
<rect x="19.5" y="20" width="13.5" height="13.5" fill="#fafafa" stroke="#555" stroke-width="1.4"/></svg><div class="t" style="left:1065.90px;top:279.30px;font-family:'Liberation Sans';font-size:13px;font-weight:400;color:#262626;letter-spacing:0.462px;">Упорядкувати</div><svg style="position:absolute;left:1105.5px;top:300.5px;" width="8" height="6" viewBox="0 0 8 6"><path d="M0.8 1L4.0 4.5L7.2 1" stroke="#444" stroke-width="1.2" fill="none"/></svg><svg style="position:absolute;left:1173px;top:236px;" width="40" height="38" viewBox="0 0 40 38"><rect x="2" y="1.5" width="31" height="31" rx="2" fill="#f2f2f2" stroke="#cfcfcf" stroke-width="1.4"/>
<path d="M35 13L22 28" stroke="#d0d0d0" stroke-width="3" stroke-linecap="round"/>
<path d="M22 27Q17 27 14 33Q20 34 24 30Z" fill="#c8c8c8"/></svg><div class="t" style="left:1162.30px;top:279.30px;font-family:'Liberation Sans';font-size:13px;font-weight:400;color:#b9b9b9;letter-spacing:0.337px;">Експрес-</div><div class="t" style="left:1168.40px;top:296.80px;font-family:'Liberation Sans';font-size:13px;font-weight:400;color:#b9b9b9;letter-spacing:0.199px;">стилі</div><svg style="position:absolute;left:1204.0px;top:300px;" width="7" height="6" viewBox="0 0 7 6"><path d="M0.8 1L3.5 4.5L6.2 1" stroke="#cacaca" stroke-width="1.2" fill="none"/></svg><svg style="position:absolute;left:1228px;top:235px;" width="21" height="21" viewBox="0 0 21 21"><path d="M6 9L11 3L16 9L11 13Z" fill="none" stroke="#bcbcbc" stroke-width="1.2"/><path d="M13 2Q17 3 17 8" stroke="#bcbcbc" stroke-width="1.2" fill="none"/><rect x="1" y="16" width="19" height="4" fill="#cbcbcb"/></svg><svg style="position:absolute;left:1262.0px;top:243px;" width="8" height="6" viewBox="0 0 8 6"><path d="M0.8 1L4.0 4.5L7.2 1" stroke="#c8c8c8" stroke-width="1.2" fill="none"/></svg><svg style="position:absolute;left:1228px;top:266px;" width="21" height="20" viewBox="0 0 21 20"><path d="M2 12V1.5H12" stroke="#bcbcbc" stroke-width="1.2" fill="none"/><path d="M7 12L15 3L17.5 5.5L9.5 13.5L6.5 14Z" fill="none" stroke="#bcbcbc" stroke-width="1.2"/><rect x="1" y="15.5" width="19" height="4" fill="#cbcbcb"/></svg><svg style="position:absolute;left:1262.0px;top:273px;" width="8" height="6" viewBox="0 0 8 6"><path d="M0.8 1L4.0 4.5L7.2 1" stroke="#c8c8c8" stroke-width="1.2" fill="none"/></svg><svg style="position:absolute;left:1228px;top:298px;" width="21" height="16" viewBox="0 0 21 16"><path d="M1.5 10L8 2.5H18L19.5 6L13 13.5H4Z" fill="#e0e0e0" stroke="#bcbcbc" stroke-width="1.2"/><path d="M1.5 10L4 13.5" stroke="#bcbcbc" stroke-width="1.2"/></svg><svg style="position:absolute;left:1253.7px;top:303px;" width="8" height="6" viewBox="0 0 8 6"><path d="M0.8 1L4.0 4.5L7.2 1" stroke="#c8c8c8" stroke-width="1.2" fill="none"/></svg><svg style="position:absolute;left:1302px;top:236px;" width="21" height="20" viewBox="0 0 21 20"><circle cx="13.5" cy="7" r="5.8" fill="none" stroke="#555" stroke-width="1.3"/><path d="M9.3 11.2L2 18.5" stroke="#555" stroke-width="1.5"/></svg><div class="t" style="left:1326.50px;top:240.70px;font-family:'Liberation Sans';font-size:13px;font-weight:400;color:#262626;letter-spacing:0.450px;">Знайти</div><svg style="position:absolute;left:1301px;top:265px;" width="21" height="22" viewBox="0 0 21 22"><text x="8.6" y="10.4" font-size="11" fill="#b65cc8" font-family="Liberation Sans">b</text>
<text x="13.6" y="19.8" font-size="11" fill="#3d8ad6" font-family="Liberation Sans">c</text>
<path d="M5.2 7.5Q2 10 3.8 13.5Q5.5 16 10.5 16M8.3 13.6L10.8 16L8.3 18.4" stroke="#3d8ad6" stroke-width="1.3" fill="none"/></svg><div class="t" style="left:1326.50px;top:270.30px;font-family:'Liberation Sans';font-size:13px;font-weight:400;color:#262626;letter-spacing:0.560px;">Замінити</div><svg style="position:absolute;left:1405.3px;top:274px;" width="8" height="6" viewBox="0 0 8 6"><path d="M0.8 1L4.0 4.5L7.2 1" stroke="#444" stroke-width="1.2" fill="none"/></svg><svg style="position:absolute;left:1304px;top:296px;" width="15" height="20" viewBox="0 0 15 20"><path d="M1.5 1.5L13 12.5H7.5L4 17.5Z M7.5 12.5L10.5 18" fill="none" stroke="#555" stroke-width="1.3"/></svg><div class="t" style="left:1327.00px;top:300.00px;font-family:'Liberation Sans';font-size:13px;font-weight:400;color:#262626;letter-spacing:-0.069px;">Виділити</div><svg style="position:absolute;left:1386.0px;top:304px;" width="8" height="6" viewBox="0 0 8 6"><path d="M0.8 1L4.0 4.5L7.2 1" stroke="#444" stroke-width="1.2" fill="none"/></svg><svg style="position:absolute;left:1462px;top:236px;" width="35" height="35" viewBox="0 0 35 35"><rect x="1.5" y="1.5" width="32" height="32" fill="#fff6f0" stroke="#d5573b" stroke-width="1.6"/>
<rect x="5.5" y="5.5" width="10.5" height="10.5" fill="#fff" stroke="#d5573b" stroke-width="1.4"/>
<rect x="19" y="5.5" width="10.5" height="10.5" fill="#fff" stroke="#d5573b" stroke-width="1.4"/>
<rect x="5.5" y="19" width="10.5" height="10.5" fill="#fff" stroke="#d5573b" stroke-width="1.4"/>
<rect x="19" y="19" width="10.5" height="10.5" fill="#fff" stroke="#d5573b" stroke-width="1.4"/></svg><div class="t" style="left:1444.80px;top:278.70px;font-family:'Liberation Sans';font-size:13px;font-weight:400;color:#262626;letter-spacing:0.297px;">Надбудови</div><div style="position:absolute;left:256px;top:344px;width:25px;height:563px;background:linear-gradient(90deg,#f0eef1,#f4f3f5 30%,#f4f3f5 70%,#f0eef1)"></div><div style="position:absolute;left:1598px;top:344px;width:25px;height:563px;background:linear-gradient(90deg,#f0eef1,#f4f4f5 25%)"></div><div style="position:absolute;left:281px;top:342px;width:1px;height:565px;background:#e2e1e4"></div><svg style="position:absolute;left:260px;top:347px;" width="14" height="10" viewBox="0 0 14 10"><path d="M1.5 8.5L7 2L12.5 8.5Z" fill="#7a7a7a"/></svg><div style="position:absolute;left:262.5px;top:363px;width:10px;height:337px;background:#7c7c7e;border-radius:5px"></div><div class="t" style="left:56.00px;top:363.46px;font-family:'Liberation Sans';font-size:16px;font-weight:400;color:#d2694a;">1</div><div class="t" style="left:55.00px;top:473.96px;font-family:'Liberation Sans';font-size:16px;font-weight:400;color:#5a5a5a;">2</div><div class="t" style="left:55.00px;top:585.46px;font-family:'Liberation Sans';font-size:16px;font-weight:400;color:#5a5a5a;">3</div><div class="t" style="left:55.00px;top:696.46px;font-family:'Liberation Sans';font-size:16px;font-weight:400;color:#5a5a5a;">4</div><div class="t" style="left:55.00px;top:807.46px;font-family:'Liberation Sans';font-size:16px;font-weight:400;color:#5a5a5a;">5</div><div style="position:absolute;left:78.5px;top:361.5px;width:161px;height:95px;border:3px solid #7a1d2c;border-radius:7px;background:#f5f1ea"></div><div style="position:absolute;left:82px;top:365px;width:153px;height:87.5px;background:#efebe4;border-radius:3px"></div><svg style="position:absolute;left:82px;top:365px;" width="153" height="86.6" viewBox="0 0 960 543"><g fill="#2a2820"><text x="322.29999999999995" y="26.100000000000023" font-size="17.85" textLength="315" lengthAdjust="spacingAndGlyphs" font-family="Liberation Sans" font-weight="bold" opacity="0.8">МІНІСТЕРСТВО ОСВІТИ І НАУКИ УКРАЇНИ</text><text x="249.39999999999998" y="47.69999999999999" font-size="17.85" textLength="460.6" lengthAdjust="spacingAndGlyphs" font-family="Liberation Sans" font-weight="bold" opacity="0.8">КРИВОРІЗЬКИЙ ДЕРЖАВНИЙ ПЕДАГОГІЧНИЙ УНІВЕРСИТЕТ</text><text x="376" y="68.5" font-size="17.85" textLength="208.3" lengthAdjust="spacingAndGlyphs" font-family="Liberation Sans" font-weight="bold" opacity="0.8">Кафедра початкової освіти</text><text x="374.70000000000005" y="177" font-size="25.200000000000003" textLength="210.8" lengthAdjust="spacingAndGlyphs" font-family="Liberation Sans" font-weight="bold" opacity="0.8">КУРСОВА РОБОТА</text><text x="338.20000000000005" y="206.70000000000005" font-size="25.200000000000003" textLength="288.6" lengthAdjust="spacingAndGlyphs" font-family="Liberation Sans" font-weight="bold" opacity="0.8">З ПЕДАГОГІКИ НА ТЕМУ:</text><text x="191.5" y="237" font-size="25.200000000000003" textLength="576.5" lengthAdjust="spacingAndGlyphs" font-family="Liberation Sans" font-weight="bold" opacity="0.8">ВИКОРИСТАННЯ МНЕМОТЕХНІК ДЛЯ РОЗВИТКУ</text><text x="178.20000000000005" y="266.20000000000005" font-size="25.200000000000003" textLength="603.3" lengthAdjust="spacingAndGlyphs" font-family="Liberation Sans" font-weight="bold" opacity="0.8">ПАМ’ЯТІ МОЛОДШИХ ШКОЛЯРІВ, ОСОБЛИВОСТІ ЇХ</text><text x="226.20000000000005" y="296.20000000000005" font-size="25.200000000000003" textLength="505" lengthAdjust="spacingAndGlyphs" font-family="Liberation Sans" font-weight="bold" opacity="0.8">ЗАСТОСУВАННЯ НА УРОКАХ МАТЕМАТИКИ</text><text x="330.6" y="331" font-size="18.900000000000002" textLength="297" lengthAdjust="spacingAndGlyphs" font-family="Liberation Sans" font-weight="bold" opacity="0.8">Студентки 2 курсу групи ЗПОІск-23</text><text x="328" y="357.5" font-size="18.900000000000002" textLength="302.7" lengthAdjust="spacingAndGlyphs" font-family="Liberation Sans" font-weight="bold" opacity="0.8">психолого-педагогічного факультету</text><text x="325.6" y="384" font-size="18.900000000000002" textLength="307" lengthAdjust="spacingAndGlyphs" font-family="Liberation Sans" font-weight="bold" opacity="0.8">спеціальності 013 Початкова освіта</text><text x="326.29999999999995" y="410.5" font-size="18.900000000000002" textLength="305.2" lengthAdjust="spacingAndGlyphs" font-family="Liberation Sans" font-weight="bold" opacity="0.8">Ломовицької Тетяни Олександрівни</text><text x="349.5" y="458.5" font-size="18.900000000000002" textLength="166" lengthAdjust="spacingAndGlyphs" font-family="Liberation Sans" font-weight="bold" opacity="0.8">Керівник: кандидат</text><text x="349.5" y="482.4" font-size="18.900000000000002" textLength="220.5" lengthAdjust="spacingAndGlyphs" font-family="Liberation Sans" font-weight="bold" opacity="0.8">педагогічних наук, доцент</text><text x="349.5" y="505.6" font-size="18.900000000000002" textLength="253" lengthAdjust="spacingAndGlyphs" font-family="Liberation Sans" font-weight="bold" opacity="0.8">Баруліна Юлія Олександрівна</text></g>
<rect x="60" y="59" width="257" height="30" fill="#1c1b12"/><rect x="60" y="59" width="32" height="346" fill="#1c1b12"/>
<rect x="866.5" y="172.7" width="32" height="306.3" fill="#1c1b12"/><rect x="641" y="449" width="257.6" height="30" fill="#1c1b12"/>
<rect x="751" y="4.5" width="169" height="167" fill="#fefefe"/>
<circle cx="836" cy="88" r="79" fill="none" stroke="#d9ba6a" stroke-width="8"/>
<circle cx="836" cy="88" r="64" fill="none" stroke="#4a5a9a" stroke-width="12" stroke-dasharray="10 6" opacity="0.8"/>
<path d="M797 39H871V104Q871 119 834 127Q797 119 797 104Z" fill="#203b8b"/>
<text x="851" y="111" font-family="Liberation Sans" font-weight="bold" font-size="72" fill="#d4b25c" textLength="58" lengthAdjust="spacingAndGlyphs">95</text>
</svg><div style="position:absolute;left:82px;top:476.5px;width:153px;height:87px;background:#efebe4;border-radius:4px;box-shadow:0 0 0 1px #d4d2cf, 0 1px 2px rgba(0,0,0,0.15)"></div><svg style="position:absolute;left:82px;top:476.5px;" width="153" height="87" viewBox="0 0 153 87">
<rect x="6.4" y="0" width="3.6" height="87" fill="#1e1d15"/>
<line x1="19" y1="14" x2="110" y2="14" stroke="#5a5854" stroke-width="3" stroke-dasharray="22 2 9 2 30 2 26" opacity="0.8"/>
<line x1="25" y1="26.75" x2="147.7" y2="26.75" stroke="#6a6864" stroke-width="1.5" stroke-dasharray="7 1.2 4 1.2 9 1.2 5 1.2 3 1.2"/><line x1="25" y1="30.75" x2="147.7" y2="30.75" stroke="#6a6864" stroke-width="1.5" stroke-dasharray="5 1.2 8 1.2 3 1.2 6 1.2 7 1.2"/><line x1="25" y1="35.25" x2="147.7" y2="35.25" stroke="#6a6864" stroke-width="1.5" stroke-dasharray="9 1.2 3 1.2 6 1.2 4 1.2 8 1.2"/><line x1="25" y1="39.25" x2="147.7" y2="39.25" stroke="#6a6864" stroke-width="1.5" stroke-dasharray="7 1.2 4 1.2 9 1.2 5 1.2 3 1.2"/><line x1="25" y1="43.75" x2="147.7" y2="43.75" stroke="#6a6864" stroke-width="1.5" stroke-dasharray="5 1.2 8 1.2 3 1.2 6 1.2 7 1.2"/><line x1="25" y1="48.75" x2="85" y2="48.75" stroke="#6a6864" stroke-width="1.5" stroke-dasharray="9 1.2 3 1.2 6 1.2 4 1.2 8 1.2"/>
<rect x="101" y="46.5" width="31.5" height="33" fill="#fbfbfb"/>
<circle cx="117" cy="50.5" r="2.8" fill="#7ac0e8"/><circle cx="129" cy="59" r="2.8" fill="#b0d080"/><circle cx="105" cy="59" r="2.8" fill="#f0b090"/>
<circle cx="109" cy="74" r="2.8" fill="#d86a8a"/><circle cx="124" cy="74" r="2.8" fill="#e8a0d0"/><circle cx="117" cy="63" r="5" fill="#c8b0b8"/></svg><div style="position:absolute;left:82px;top:588.5px;width:153px;height:87px;background:#efebe4;border-radius:4px;box-shadow:0 0 0 1px #d4d2cf, 0 1px 2px rgba(0,0,0,0.15)"></div><svg style="position:absolute;left:82px;top:588.5px;" width="153" height="87" viewBox="0 0 153 87">
<rect x="6.4" y="0" width="3.6" height="87" fill="#1e1d15"/>
<rect x="20" y="13" width="1.6" height="1.6" fill="#555"/>
<line x1="25" y1="13.75" x2="148" y2="13.75" stroke="#6a6864" stroke-width="1.5" stroke-dasharray="7 1.2 4 1.2 9 1.2 5 1.2 3 1.2"/><line x1="25" y1="17.95" x2="146" y2="17.95" stroke="#6a6864" stroke-width="1.5" stroke-dasharray="5 1.2 8 1.2 3 1.2 6 1.2 7 1.2"/><line x1="25" y1="22.25" x2="147" y2="22.25" stroke="#6a6864" stroke-width="1.5" stroke-dasharray="9 1.2 3 1.2 6 1.2 4 1.2 8 1.2"/><line x1="25" y1="26.25" x2="146" y2="26.25" stroke="#6a6864" stroke-width="1.5" stroke-dasharray="7 1.2 4 1.2 9 1.2 5 1.2 3 1.2"/><line x1="25" y1="30.75" x2="148" y2="30.75" stroke="#6a6864" stroke-width="1.5" stroke-dasharray="5 1.2 8 1.2 3 1.2 6 1.2 7 1.2"/><line x1="25" y1="35.25" x2="146" y2="35.25" stroke="#6a6864" stroke-width="1.5" stroke-dasharray="9 1.2 3 1.2 6 1.2 4 1.2 8 1.2"/><line x1="25" y1="41.25" x2="95" y2="41.25" stroke="#6a6864" stroke-width="1.5" stroke-dasharray="7 1.2 4 1.2 9 1.2 5 1.2 3 1.2"/>
<rect x="74" y="42.5" width="58.5" height="32.5" fill="#f8e6b8"/>
<circle cx="92" cy="50" r="4" fill="#f0d050"/><circle cx="104" cy="47" r="3.5" fill="#9ad0e0"/><circle cx="122" cy="48" r="5" fill="#d8c0e8"/>
<circle cx="100" cy="60" r="7" fill="#f0a860"/><circle cx="101" cy="60" r="6" fill="none" stroke="#222" stroke-width="2"/>
<path d="M107 66L113 72" stroke="#222" stroke-width="2.2"/>
<path d="M84 75Q84 60 96 58L99 75Z" fill="#333"/>
<circle cx="124" cy="66" r="4" fill="#e8d050"/><circle cx="131" cy="72" r="3" fill="#4a8ab0"/></svg><div style="position:absolute;left:82px;top:698.7px;width:153px;height:87px;background:#efebe4;border-radius:4px;box-shadow:0 0 0 1px #d4d2cf, 0 1px 2px rgba(0,0,0,0.15)"></div><svg style="position:absolute;left:82px;top:698.7px;" width="153" height="87" viewBox="0 0 153 87">
<rect x="6.4" y="0" width="3.6" height="87" fill="#1e1d15"/>
<rect x="19.5" y="16" width="1.6" height="1.6" fill="#555"/>
<line x1="24.6" y1="17.25" x2="138" y2="17.25" stroke="#6a6864" stroke-width="1.5" stroke-dasharray="7 1.2 4 1.2 9 1.2 5 1.2 3 1.2"/><line x1="24.6" y1="23.25" x2="136" y2="23.25" stroke="#6a6864" stroke-width="1.5" stroke-dasharray="5 1.2 8 1.2 3 1.2 6 1.2 7 1.2"/><line x1="24.6" y1="28.75" x2="137" y2="28.75" stroke="#6a6864" stroke-width="1.5" stroke-dasharray="9 1.2 3 1.2 6 1.2 4 1.2 8 1.2"/><line x1="24.6" y1="34.25" x2="136" y2="34.25" stroke="#6a6864" stroke-width="1.5" stroke-dasharray="7 1.2 4 1.2 9 1.2 5 1.2 3 1.2"/><line x1="24.6" y1="39.75" x2="138" y2="39.75" stroke="#6a6864" stroke-width="1.5" stroke-dasharray="5 1.2 8 1.2 3 1.2 6 1.2 7 1.2"/><line x1="24.6" y1="45.25" x2="136" y2="45.25" stroke="#6a6864" stroke-width="1.5" stroke-dasharray="9 1.2 3 1.2 6 1.2 4 1.2 8 1.2"/><line x1="24.6" y1="50.75" x2="128" y2="50.75" stroke="#6a6864" stroke-width="1.5" stroke-dasharray="7 1.2 4 1.2 9 1.2 5 1.2 3 1.2"/>
<rect x="86.5" y="43" width="42.5" height="30" fill="#15150f"/>
<g fill="#5a8ad0" opacity="0.6"><circle cx="92" cy="50" r="1.2"/><circle cx="124" cy="48" r="1.2"/><circle cx="96" cy="66" r="1.2"/><circle cx="122" cy="64" r="1.2"/></g>
<circle cx="108" cy="58" r="7.5" fill="#f2c8a8"/><path d="M100 56Q100 46 108 46Q117 46 116 56Q111 51 100 56Z" fill="#d05a30"/>
<path d="M97 73Q100 66 108 66Q116 66 120 73Z" fill="#7ab848"/></svg><div style="position:absolute;left:82px;top:809.7px;width:153px;height:87px;background:#efebe4;border-radius:4px;box-shadow:0 0 0 1px #d4d2cf, 0 1px 2px rgba(0,0,0,0.15)"></div><svg style="position:absolute;left:82px;top:809.7px;" width="153" height="87" viewBox="0 0 153 87">
<rect x="6.4" y="0" width="3.6" height="87" fill="#1e1d15"/>
<line x1="19.5" y1="14" x2="136.5" y2="14" stroke="#4e4c48" stroke-width="2.8" stroke-dasharray="30 2 40 2 8 2 35" opacity="0.8"/><line x1="19.5" y1="21" x2="119.5" y2="21" stroke="#4e4c48" stroke-width="2.8" stroke-dasharray="38 2 8 2 50" opacity="0.8"/>
<line x1="24" y1="26.6" x2="141" y2="26.6" stroke="#6a6864" stroke-width="1.2" stroke-dasharray="7 1.2 4 1.2 9 1.2 5 1.2 3 1.2"/><line x1="24" y1="32.6" x2="141" y2="32.6" stroke="#6a6864" stroke-width="1.2" stroke-dasharray="5 1.2 8 1.2 3 1.2 6 1.2 7 1.2"/>
<line x1="24" y1="38.6" x2="40" y2="38.6" stroke="#6a6864" stroke-width="1.2" stroke-dasharray="7 1.2 4 1.2 9 1.2 5 1.2 3 1.2"/><line x1="24" y1="43.6" x2="48" y2="43.6" stroke="#6a6864" stroke-width="1.2" stroke-dasharray="5 1.2 8 1.2 3 1.2 6 1.2 7 1.2"/><line x1="24" y1="48.6" x2="38" y2="48.6" stroke="#6a6864" stroke-width="1.2" stroke-dasharray="9 1.2 3 1.2 6 1.2 4 1.2 8 1.2"/><line x1="24" y1="53.6" x2="42" y2="53.6" stroke="#6a6864" stroke-width="1.2" stroke-dasharray="7 1.2 4 1.2 9 1.2 5 1.2 3 1.2"/><line x1="24" y1="58.6" x2="56" y2="58.6" stroke="#6a6864" stroke-width="1.2" stroke-dasharray="5 1.2 8 1.2 3 1.2 6 1.2 7 1.2"/><line x1="24" y1="63.6" x2="36" y2="63.6" stroke="#6a6864" stroke-width="1.2" stroke-dasharray="9 1.2 3 1.2 6 1.2 4 1.2 8 1.2"/><line x1="24" y1="68.6" x2="40" y2="68.6" stroke="#6a6864" stroke-width="1.2" stroke-dasharray="7 1.2 4 1.2 9 1.2 5 1.2 3 1.2"/><line x1="24" y1="73.6" x2="38" y2="73.6" stroke="#6a6864" stroke-width="1.2" stroke-dasharray="5 1.2 8 1.2 3 1.2 6 1.2 7 1.2"/><line x1="24" y1="78.6" x2="46" y2="78.6" stroke="#6a6864" stroke-width="1.2" stroke-dasharray="9 1.2 3 1.2 6 1.2 4 1.2 8 1.2"/><line x1="24" y1="83.6" x2="50" y2="83.6" stroke="#6a6864" stroke-width="1.2" stroke-dasharray="7 1.2 4 1.2 9 1.2 5 1.2 3 1.2"/>
<g fill="#555"><rect x="20" y="26" width="1.4" height="1.4"/><rect x="20" y="32" width="1.4" height="1.4"/><rect x="20" y="38" width="1.4" height="1.4"/><rect x="20" y="43" width="1.4" height="1.4"/><rect x="20" y="48" width="1.4" height="1.4"/><rect x="20" y="53" width="1.4" height="1.4"/><rect x="20" y="58" width="1.4" height="1.4"/><rect x="20" y="63" width="1.4" height="1.4"/><rect x="20" y="68" width="1.4" height="1.4"/><rect x="20" y="73" width="1.4" height="1.4"/><rect x="20" y="78" width="1.4" height="1.4"/></g>
<rect x="67.6" y="35.5" width="43.5" height="46.5" fill="#f6f4f2"/><rect x="69.0" y="37.0" width="4.2" height="4.6" fill="#c080c8" opacity="0.75"/><rect x="75.0" y="37.0" width="4.2" height="4.6" fill="#c8a080" opacity="0.75"/><rect x="81.0" y="37.0" width="4.2" height="4.6" fill="#50a0a0" opacity="0.75"/><rect x="87.0" y="37.0" width="4.2" height="4.6" fill="#70b8c8" opacity="0.75"/><rect x="93.0" y="37.0" width="4.2" height="4.6" fill="#d8c050" opacity="0.75"/><rect x="99.0" y="37.0" width="4.2" height="4.6" fill="#c8a080" opacity="0.75"/><rect x="105.0" y="37.0" width="4.2" height="4.6" fill="#9070c0" opacity="0.75"/><rect x="69.0" y="43.4" width="4.2" height="4.6" fill="#c8a080" opacity="0.75"/><rect x="75.0" y="43.4" width="4.2" height="4.6" fill="#e0a070" opacity="0.75"/><rect x="81.0" y="43.4" width="4.2" height="4.6" fill="#c8a080" opacity="0.75"/><rect x="87.0" y="43.4" width="4.2" height="4.6" fill="#7a9ad8" opacity="0.75"/><rect x="93.0" y="43.4" width="4.2" height="4.6" fill="#9070c0" opacity="0.75"/><rect x="99.0" y="43.4" width="4.2" height="4.6" fill="#80c080" opacity="0.75"/><rect x="105.0" y="43.4" width="4.2" height="4.6" fill="#50a0a0" opacity="0.75"/><rect x="69.0" y="49.8" width="4.2" height="4.6" fill="#c080c8" opacity="0.75"/><rect x="75.0" y="49.8" width="4.2" height="4.6" fill="#c080c8" opacity="0.75"/><rect x="81.0" y="49.8" width="4.2" height="4.6" fill="#9070c0" opacity="0.75"/><rect x="87.0" y="49.8" width="4.2" height="4.6" fill="#50a0a0" opacity="0.75"/><rect x="93.0" y="49.8" width="4.2" height="4.6" fill="#50a0a0" opacity="0.75"/><rect x="99.0" y="49.8" width="4.2" height="4.6" fill="#9070c0" opacity="0.75"/><rect x="105.0" y="49.8" width="4.2" height="4.6" fill="#e07080" opacity="0.75"/><rect x="69.0" y="56.2" width="4.2" height="4.6" fill="#70b8c8" opacity="0.75"/><rect x="75.0" y="56.2" width="4.2" height="4.6" fill="#c080c8" opacity="0.75"/><rect x="81.0" y="56.2" width="4.2" height="4.6" fill="#70b8c8" opacity="0.75"/><rect x="87.0" y="56.2" width="4.2" height="4.6" fill="#50a0a0" opacity="0.75"/><rect x="93.0" y="56.2" width="4.2" height="4.6" fill="#e07080" opacity="0.75"/><rect x="99.0" y="56.2" width="4.2" height="4.6" fill="#7a9ad8" opacity="0.75"/><rect x="105.0" y="56.2" width="4.2" height="4.6" fill="#e0a070" opacity="0.75"/><rect x="69.0" y="62.6" width="4.2" height="4.6" fill="#70b8c8" opacity="0.75"/><rect x="75.0" y="62.6" width="4.2" height="4.6" fill="#c8a080" opacity="0.75"/><rect x="81.0" y="62.6" width="4.2" height="4.6" fill="#7a9ad8" opacity="0.75"/><rect x="87.0" y="62.6" width="4.2" height="4.6" fill="#80c080" opacity="0.75"/><rect x="93.0" y="62.6" width="4.2" height="4.6" fill="#7a9ad8" opacity="0.75"/><rect x="99.0" y="62.6" width="4.2" height="4.6" fill="#80c080" opacity="0.75"/><rect x="105.0" y="62.6" width="4.2" height="4.6" fill="#9070c0" opacity="0.75"/><rect x="69.0" y="69.0" width="4.2" height="4.6" fill="#c8a080" opacity="0.75"/><rect x="75.0" y="69.0" width="4.2" height="4.6" fill="#e07080" opacity="0.75"/><rect x="81.0" y="69.0" width="4.2" height="4.6" fill="#e07080" opacity="0.75"/><rect x="87.0" y="69.0" width="4.2" height="4.6" fill="#e07080" opacity="0.75"/><rect x="93.0" y="69.0" width="4.2" height="4.6" fill="#c8a080" opacity="0.75"/><rect x="99.0" y="69.0" width="4.2" height="4.6" fill="#9070c0" opacity="0.75"/><rect x="105.0" y="69.0" width="4.2" height="4.6" fill="#70b8c8" opacity="0.75"/><rect x="69.0" y="75.4" width="4.2" height="4.6" fill="#d8c050" opacity="0.75"/><rect x="75.0" y="75.4" width="4.2" height="4.6" fill="#e0a070" opacity="0.75"/><rect x="81.0" y="75.4" width="4.2" height="4.6" fill="#7a9ad8" opacity="0.75"/><rect x="87.0" y="75.4" width="4.2" height="4.6" fill="#70b8c8" opacity="0.75"/><rect x="93.0" y="75.4" width="4.2" height="4.6" fill="#9070c0" opacity="0.75"/><rect x="99.0" y="75.4" width="4.2" height="4.6" fill="#c080c8" opacity="0.75"/><rect x="105.0" y="75.4" width="4.2" height="4.6" fill="#80c080" opacity="0.75"/></svg><div style="position:absolute;left:464px;top:357px;width:960px;height:540px;background:#f0ece6;border:1px solid #cbc9c6"></div><div style="position:absolute;left:524px;top:416px;width:257px;height:30px;background:#1c1b12"></div><div style="position:absolute;left:524px;top:416px;width:32px;height:346px;background:#1c1b12"></div><div style="position:absolute;left:1330.5px;top:529.7px;width:32px;height:306.3px;background:#1c1b12"></div><div style="position:absolute;left:1105px;top:806px;width:257.6px;height:30px;background:#1c1b12"></div><svg style="position:absolute;left:1215px;top:361.5px;" width="169" height="167" viewBox="0 0 169 167">
<rect x="0" y="0" width="169" height="167" fill="#fefefe"/>
<circle cx="85.4" cy="83.6" r="79.2" fill="none" stroke="#d9ba6a" stroke-width="1.6"/>
<defs><path id="lgup" d="M21.39 72.31 A65 65 0 0 1 142.79 53.08"/><path id="lglo" d="M14.29 94.86 A72 72 0 0 0 145.09 123.86"/></defs>
<text font-family="Liberation Sans" font-weight="bold" font-size="10.3" fill="#2a3d8c"><textPath href="#lgup" textLength="159" lengthAdjust="spacingAndGlyphs">КРИВОРІЗЬКИЙ ДЕРЖАВНИЙ</textPath></text>
<text font-family="Liberation Sans" font-weight="bold" font-size="10.8" fill="#2a3d8c"><textPath href="#lglo" textLength="168" lengthAdjust="spacingAndGlyphs">ПЕДАГОГІЧНИЙ УНІВЕРСИТЕТ</textPath></text>
<circle cx="15.4" cy="91.6" r="1.6" fill="#d9b865"/>
<ellipse cx="52.5" cy="125.7" rx="2" ry="5.5" transform="rotate(188 52.5 125.7)" fill="#dcbd6e"/><ellipse cx="53.7" cy="117.5" rx="1.8" ry="5" transform="rotate(248 53.7 117.5)" fill="#e2c782"/><ellipse cx="44.3" cy="119.9" rx="2" ry="5.5" transform="rotate(198 44.3 119.9)" fill="#dcbd6e"/><ellipse cx="46.9" cy="112.1" rx="1.8" ry="5" transform="rotate(258 46.9 112.1)" fill="#e2c782"/><ellipse cx="37.3" cy="112.5" rx="2" ry="5.5" transform="rotate(209 37.3 112.5)" fill="#dcbd6e"/><ellipse cx="41.2" cy="105.1" rx="1.8" ry="5" transform="rotate(269 41.2 105.1)" fill="#e2c782"/><ellipse cx="31.7" cy="103.7" rx="2" ry="5.5" transform="rotate(220 31.7 103.7)" fill="#dcbd6e"/><ellipse cx="36.9" cy="97.0" rx="1.8" ry="5" transform="rotate(280 36.9 97.0)" fill="#e2c782"/><ellipse cx="28.0" cy="93.7" rx="2" ry="5.5" transform="rotate(230 28.0 93.7)" fill="#dcbd6e"/><ellipse cx="34.3" cy="88.1" rx="1.8" ry="5" transform="rotate(290 34.3 88.1)" fill="#e2c782"/><ellipse cx="26.3" cy="83.1" rx="2" ry="5.5" transform="rotate(240 26.3 83.1)" fill="#dcbd6e"/><ellipse cx="33.6" cy="78.6" rx="1.8" ry="5" transform="rotate(300 33.6 78.6)" fill="#e2c782"/><ellipse cx="26.9" cy="72.2" rx="2" ry="5.5" transform="rotate(251 26.9 72.2)" fill="#dcbd6e"/><ellipse cx="34.8" cy="69.1" rx="1.8" ry="5" transform="rotate(311 34.8 69.1)" fill="#e2c782"/><ellipse cx="29.6" cy="61.6" rx="2" ry="5.5" transform="rotate(262 29.6 61.6)" fill="#dcbd6e"/><ellipse cx="38.0" cy="60.0" rx="1.8" ry="5" transform="rotate(322 38.0 60.0)" fill="#e2c782"/><ellipse cx="34.5" cy="51.8" rx="2" ry="5.5" transform="rotate(272 34.5 51.8)" fill="#dcbd6e"/><ellipse cx="43.1" cy="51.7" rx="1.8" ry="5" transform="rotate(332 43.1 51.7)" fill="#e2c782"/><ellipse cx="41.3" cy="43.2" rx="2" ry="5.5" transform="rotate(282 41.3 43.2)" fill="#dcbd6e"/><ellipse cx="49.7" cy="44.7" rx="1.8" ry="5" transform="rotate(342 49.7 44.7)" fill="#e2c782"/><ellipse cx="49.7" cy="36.2" rx="2" ry="5.5" transform="rotate(293 49.7 36.2)" fill="#dcbd6e"/><ellipse cx="57.6" cy="39.2" rx="1.8" ry="5" transform="rotate(353 57.6 39.2)" fill="#e2c782"/><ellipse cx="111.2" cy="132.2" rx="2" ry="5.5" transform="rotate(2 111.2 132.2)" fill="#dcbd6e"/><ellipse cx="110.8" cy="124.3" rx="1.8" ry="5" transform="rotate(-58 110.8 124.3)" fill="#e2c782"/><ellipse cx="118.5" cy="127.5" rx="2" ry="5.5" transform="rotate(-7 118.5 127.5)" fill="#dcbd6e"/><ellipse cx="116.9" cy="119.8" rx="1.8" ry="5" transform="rotate(-67 116.9 119.8)" fill="#e2c782"/><ellipse cx="125.0" cy="121.8" rx="2" ry="5.5" transform="rotate(-16 125.0 121.8)" fill="#dcbd6e"/><ellipse cx="122.2" cy="114.5" rx="1.8" ry="5" transform="rotate(-76 122.2 114.5)" fill="#e2c782"/><ellipse cx="130.5" cy="115.1" rx="2" ry="5.5" transform="rotate(-25 130.5 115.1)" fill="#dcbd6e"/><ellipse cx="126.5" cy="108.3" rx="1.8" ry="5" transform="rotate(-85 126.5 108.3)" fill="#e2c782"/>
<path d="M50 137 Q85 128 122 137M50 130Q85 140 122 130" stroke="#d9b865" stroke-width="1.6" fill="none"/>
<path d="M46 34.5H120V100Q120 115 83 123Q46 115 46 100Z" fill="#203b8b"/>
<path d="M49 37.5H117V99Q117 112 83 120Q49 112 49 99Z" fill="none" stroke="#fff" stroke-width="1"/>
<path d="M62 56L83 46L104 56Z" fill="#fff"/>
<rect x="63" y="57" width="41" height="2.5" fill="#fff"/>
<g fill="#fff"><rect x="65" y="61" width="3" height="17"/><rect x="71" y="61" width="3" height="17"/><rect x="77" y="61" width="3" height="17"/><rect x="83" y="61" width="3" height="17"/><rect x="89" y="61" width="3" height="17"/><rect x="95" y="61" width="3" height="17"/><rect x="101" y="61" width="3" height="17"/></g>
<rect x="60" y="79" width="47" height="2.5" fill="#fff"/>
<path d="M56 101 Q62 86 83 84 Q104 86 110 101 Z" fill="#fff"/>
<text x="83" y="93" font-size="3.6" fill="#203b8b" text-anchor="middle" font-family="Liberation Serif">VERITAS</text>
<text x="83" y="97.5" font-size="3.6" fill="#203b8b" text-anchor="middle" font-family="Liberation Serif">CREATIO</text>
<text x="83" y="102" font-size="3.6" fill="#203b8b" text-anchor="middle" font-family="Liberation Serif">LIBERTAS</text>
<path d="M52 104Q70 102 83 110Q96 102 114 104" stroke="#fff" stroke-width="1.6" fill="none"/>
<text x="0" y="0" font-family="Liberation Sans" font-weight="bold" font-size="70" fill="#d4b25c" transform="translate(100 107.5) scale(0.78 1)" letter-spacing="-6">95</text>
</svg><div class="t" style="left:786.30px;top:368.71px;font-family:'Liberation Sans';font-size:17px;font-weight:400;color:#262420;transform:scaleX(0.9221);transform-origin:0 0;">МІНІСТЕРСТВО ОСВІТИ І НАУКИ УКРАЇНИ</div><div class="t" style="left:713.40px;top:390.31px;font-family:'Liberation Sans';font-size:17px;font-weight:400;color:#262420;transform:scaleX(0.9200);transform-origin:0 0;">КРИВОРІЗЬКИЙ ДЕРЖАВНИЙ ПЕДАГОГІЧНИЙ УНІВЕРСИТЕТ</div><div class="t" style="left:840.00px;top:411.11px;font-family:'Liberation Sans';font-size:17px;font-weight:400;color:#262420;transform:scaleX(0.9786);transform-origin:0 0;">Кафедра початкової освіти</div><div class="t" style="left:838.70px;top:513.68px;font-family:'Liberation Sans';font-size:24px;font-weight:400;color:#262420;transform:scaleX(0.9725);transform-origin:0 0;">КУРСОВА РОБОТА</div><div class="t" style="left:802.20px;top:543.38px;font-family:'Liberation Sans';font-size:24px;font-weight:400;color:#262420;transform:scaleX(1.0069);transform-origin:0 0;">З ПЕДАГОГІКИ НА ТЕМУ:</div><div class="t" style="left:655.50px;top:573.68px;font-family:'Liberation Sans';font-size:24px;font-weight:400;color:#262420;transform:scaleX(1.0126);transform-origin:0 0;">ВИКОРИСТАННЯ МНЕМОТЕХНІК ДЛЯ РОЗВИТКУ</div><div class="t" style="left:642.20px;top:602.88px;font-family:'Liberation Sans';font-size:24px;font-weight:400;color:#262420;transform:scaleX(1.0096);transform-origin:0 0;">ПАМ’ЯТІ МОЛОДШИХ ШКОЛЯРІВ, ОСОБЛИВОСТІ ЇХ</div><div class="t" style="left:690.20px;top:632.88px;font-family:'Liberation Sans';font-size:24px;font-weight:400;color:#262420;transform:scaleX(1.0009);transform-origin:0 0;">ЗАСТОСУВАННЯ НА УРОКАХ МАТЕМАТИКИ</div><div class="t" style="left:794.60px;top:672.76px;font-family:'Liberation Sans';font-size:18px;font-weight:400;color:#262420;transform:scaleX(1.0162);transform-origin:0 0;">Студентки 2 курсу групи ЗПОІск-23</div><div class="t" style="left:792.00px;top:699.26px;font-family:'Liberation Sans';font-size:18px;font-weight:400;color:#262420;transform:scaleX(1.0019);transform-origin:0 0;">психолого-педагогічного факультету</div><div class="t" style="left:789.60px;top:725.76px;font-family:'Liberation Sans';font-size:18px;font-weight:400;color:#262420;transform:scaleX(1.0335);transform-origin:0 0;">спеціальності 013 Початкова освіта</div><div class="t" style="left:790.30px;top:752.26px;font-family:'Liberation Sans';font-size:18px;font-weight:400;color:#262420;transform:scaleX(1.0194);transform-origin:0 0;">Ломовицької Тетяни Олександрівни</div><div class="t" style="left:813.50px;top:800.26px;font-family:'Liberation Sans';font-size:18px;font-weight:400;color:#262420;transform:scaleX(1.0434);transform-origin:0 0;">Керівник: кандидат</div><div class="t" style="left:813.50px;top:824.16px;font-family:'Liberation Sans';font-size:18px;font-weight:400;color:#262420;transform:scaleX(1.0235);transform-origin:0 0;">педагогічних наук, доцент</div><div class="t" style="left:813.50px;top:847.36px;font-family:'Liberation Sans';font-size:18px;font-weight:400;color:#262420;transform:scaleX(1.0052);transform-origin:0 0;">Баруліна Юлія Олександрівна</div><svg style="position:absolute;left:756px;top:563px;" width="14" height="22" viewBox="0 0 14 22"><path d="M1 1V17.5L5 13.5L8 20L10.5 19L7.5 12.5H13Z" fill="#fff" stroke="#222" stroke-width="1.1" stroke-linejoin="round"/></svg><svg style="position:absolute;left:1607px;top:347px;" width="12" height="9" viewBox="0 0 12 9"><path d="M1 8L6 1.5L11 8Z" fill="#7a7a7a"/></svg><div style="position:absolute;left:1608.8px;top:363.5px;width:9.7px;height:50.3px;background:#7c7c7e;border-radius:5px"></div><svg style="position:absolute;left:1607px;top:838px;" width="12" height="9" viewBox="0 0 12 9"><path d="M1 1.5L6 8L11 1.5Z" fill="#7a7a7a"/></svg><svg style="position:absolute;left:1607px;top:855px;" width="12" height="13" viewBox="0 0 12 13"><path d="M1 6L6 0.5L11 6Z M1 12L6 6.5L11 12Z" fill="#7a7a7a"/></svg><svg style="position:absolute;left:1607px;top:874px;" width="12" height="13" viewBox="0 0 12 13"><path d="M1 1L6 6.5L11 1Z M1 7L6 12.5L11 7Z" fill="#7a7a7a"/></svg><div style="position:absolute;left:0px;top:907px;width:1630px;height:59px;background:#000"></div><div style="position:absolute;left:1623px;top:137px;width:7px;height:770px;background:#111"></div><svg style="position:absolute;left:38px;top:925px;" width="33" height="21" viewBox="0 0 33 21"><rect x="1.3" y="2" width="19" height="17" rx="4.5" fill="none" stroke="#fafafa" stroke-width="1.8"/><path d="M20.5 10.5L29.5 3.2V17.8Z" fill="none" stroke="#fafafa" stroke-width="1.8" stroke-linejoin="round"/></svg><svg style="position:absolute;left:95px;top:931px;" width="10" height="7" viewBox="0 0 10 7"><path d="M1.5 5.5L5 2L8.5 5.5" stroke="#fafafa" stroke-width="1.6" fill="none" stroke-linecap="round"/></svg><svg style="position:absolute;left:206px;top:922px;" width="28" height="26" viewBox="0 0 28 26"><circle cx="9.5" cy="6.4" r="3.2" fill="none" stroke="#fafafa" stroke-width="1.9"/><circle cx="18.8" cy="10.1" r="3.2" fill="none" stroke="#fafafa" stroke-width="1.9"/><path d="M13.8 14.8Q12 13.8 9.5 13.8Q3.3 14 3.3 19.5V20.5Q3.3 23.3 6 23.3H10.3" fill="none" stroke="#fafafa" stroke-width="1.9" stroke-linecap="round"/><rect x="12.9" y="17" width="11.8" height="6.5" rx="3.25" fill="none" stroke="#fafafa" stroke-width="1.9"/></svg><div class="t" style="left:241.50px;top:925.73px;font-family:'Liberation Sans';font-size:14.5px;font-weight:400;color:#c8c8c8;">6</div><svg style="position:absolute;left:281px;top:931px;" width="10" height="7" viewBox="0 0 10 7"><path d="M1.5 5.5L5 2L8.5 5.5" stroke="#fafafa" stroke-width="1.6" fill="none" stroke-linecap="round"/></svg><svg style="position:absolute;left:342px;top:922px;" width="30" height="27" viewBox="0 0 30 27"><path d="M8 5Q9 0.9 14 0.9H17Q22.5 0.9 24.5 5" fill="none" stroke="#fafafa" stroke-width="1.8"/><path d="M8.5 6.6H16.4Q22.4 6.6 22.4 12.6V16.5Q22.4 22.5 16.4 22.5H12.5L7 26V22.3Q2.2 21.5 2.2 16.5V12.6Q2.2 6.6 8.5 6.6Z" fill="#000" stroke="#fafafa" stroke-width="1.8" stroke-linejoin="round"/><circle cx="7.8" cy="14.6" r="1.3" fill="#fafafa"/><circle cx="12.3" cy="14.6" r="1.3" fill="#fafafa"/><circle cx="16.8" cy="14.6" r="1.3" fill="#fafafa"/></svg><svg style="position:absolute;left:362px;top:917px;" width="20" height="20" viewBox="0 0 20 20"><circle cx="10" cy="10" r="9.3" fill="#e8303a"/><text x="10" y="14.5" text-anchor="middle" font-family="Liberation Sans" font-weight="bold" font-size="12.5" fill="#fff">2</text></svg><svg style="position:absolute;left:394px;top:931px;" width="10" height="7" viewBox="0 0 10 7"><path d="M1.5 5.5L5 2L8.5 5.5" stroke="#fafafa" stroke-width="1.6" fill="none" stroke-linecap="round"/></svg><svg style="position:absolute;left:460px;top:922px;" width="33" height="26" viewBox="0 0 33 26"><path d="M16.5 24.5Q3 17 2 9.5Q1.5 2.5 8.5 2Q13.5 2 16.5 6.5Q19.5 2 24.5 2Q31.5 2.5 31 9.5Q30 17 16.5 24.5Z" fill="none" stroke="#fafafa" stroke-width="1.8" stroke-linejoin="round" transform="rotate(16 16.5 13)"/></svg><svg style="position:absolute;left:518px;top:931px;" width="10" height="7" viewBox="0 0 10 7"><path d="M1.5 5.5L5 2L8.5 5.5" stroke="#fafafa" stroke-width="1.6" fill="none" stroke-linecap="round"/></svg><svg style="position:absolute;left:586px;top:923px;" width="30" height="24" viewBox="0 0 30 24"><rect x="0" y="0" width="30" height="24" rx="3.5" fill="#22ee8a"/><path d="M8.2 12.2L15 5.2L21.8 12.2Z" fill="#000" stroke="#000" stroke-width="1.4" stroke-linejoin="round"/><rect x="13" y="11" width="4" height="8" rx="0.8" fill="#000"/></svg><svg style="position:absolute;left:641px;top:931px;" width="10" height="7" viewBox="0 0 10 7"><path d="M1.5 5.5L5 2L8.5 5.5" stroke="#fafafa" stroke-width="1.6" fill="none" stroke-linecap="round"/></svg><svg style="position:absolute;left:758px;top:921px;" width="26" height="29" viewBox="0 0 26 29"><path d="M13 2.2L23.5 5.5V13.5Q23.5 21.5 13 26.8Q2.5 21.5 2.5 13.5V5.5Z" fill="none" stroke="#fafafa" stroke-width="1.9" stroke-linejoin="round"/><path d="M13 5.8L5.8 8V13.5H13Z M13 13.5H20.2Q19.5 19.5 13 23.2Z" fill="#fafafa"/></svg><svg style="position:absolute;left:920px;top:920px;" width="32" height="32" viewBox="0 0 32 32"><circle cx="23.4" cy="7.6" r="4.2" fill="none" stroke="#fafafa" stroke-width="1.9"/><circle cx="8.3" cy="22.4" r="4.2" fill="none" stroke="#fafafa" stroke-width="1.9"/><path d="M3.6 12.8V7.2Q3.6 2.6 8.2 2.6H13.2M28.8 17V23Q28.8 27.6 24.2 27.6H18.5" fill="none" stroke="#fafafa" stroke-width="1.9" stroke-linecap="round"/></svg><svg style="position:absolute;left:971px;top:931px;" width="10" height="7" viewBox="0 0 10 7"><path d="M1.5 5.5L5 2L8.5 5.5" stroke="#fafafa" stroke-width="1.6" fill="none" stroke-linecap="round"/></svg><svg style="position:absolute;left:1051px;top:922px;" width="33" height="26" viewBox="0 0 33 26"><path d="M11.5 22H5Q2 22 2 19V5Q2 2 5 2H27Q30 2 30 5V18.5" fill="none" stroke="#fafafa" stroke-width="1.9" stroke-linecap="round"/><path d="M13.5 22.3Q15.5 19.6 19 19.6H28.8Q30.8 19.6 30.8 21.6V23Q30.8 25 28.8 25H19Q15.5 25 13.5 22.3Z" fill="#fafafa"/></svg><svg style="position:absolute;left:1121px;top:931px;" width="10" height="7" viewBox="0 0 10 7"><path d="M1.5 5.5L5 2L8.5 5.5" stroke="#fafafa" stroke-width="1.6" fill="none" stroke-linecap="round"/></svg><svg style="position:absolute;left:1214px;top:920px;" width="32" height="32" viewBox="0 0 32 32"><circle cx="16" cy="16" r="14.2" fill="none" stroke="#fafafa" stroke-width="1.9"/><circle cx="16" cy="9.5" r="1.8" fill="#fafafa"/><path d="M13 13.5H16.5V22M13 22.5H19.5" stroke="#fafafa" stroke-width="2.2" fill="none"/></svg><svg style="position:absolute;left:1388px;top:919px;" width="64" height="32" viewBox="0 0 64 32"><rect x="1.5" y="1.8" width="27" height="28.5" rx="6" fill="none" stroke="#fafafa" stroke-width="1.9"/><rect x="32.5" y="1.8" width="27" height="28.5" rx="6" fill="none" stroke="#fafafa" stroke-width="1.9"/><rect x="9.5" y="10" width="3.2" height="10.5" rx="1.4" fill="#fafafa"/><rect x="17" y="10" width="3.2" height="10.5" rx="1.4" fill="#fafafa"/><rect x="40.5" y="10" width="10.5" height="10.5" rx="2" fill="#fafafa"/></svg><svg style="position:absolute;left:1568px;top:919px;" width="32" height="32" viewBox="0 0 32 32"><circle cx="16" cy="16" r="14.3" fill="none" stroke="#fafafa" stroke-width="1.9"/><circle cx="9.5" cy="16" r="1.7" fill="#fafafa"/><circle cx="16" cy="16" r="1.7" fill="#fafafa"/><circle cx="22.5" cy="16" r="1.7" fill="#fafafa"/></svg><div class="t" style="left:32.09px;top:957.80px;font-family:'Liberation Sans';font-size:15px;font-weight:400;color:#cfcfcf;">Видео</div><div class="t" style="left:184.66px;top:957.80px;font-family:'Liberation Sans';font-size:15px;font-weight:400;color:#cfcfcf;">Участники</div><div class="t" style="left:345.55px;top:957.80px;font-family:'Liberation Sans';font-size:15px;font-weight:400;color:#cfcfcf;">Чат</div><div class="t" style="left:423.70px;top:957.80px;font-family:'Liberation Sans';font-size:15px;font-weight:400;color:#cfcfcf;">Отреагировать</div><div class="t" style="left:559.58px;top:957.80px;font-family:'Liberation Sans';font-size:15px;font-weight:400;color:#cfcfcf;">Поделиться</div><div class="t" style="left:674.92px;top:957.80px;font-family:'Liberation Sans';font-size:15px;font-weight:400;color:#cfcfcf;">Инструменты организатора</div><div class="t" style="left:892.12px;top:957.80px;font-family:'Liberation Sans';font-size:15px;font-weight:400;color:#cfcfcf;">Приложения</div><div class="t" style="left:1005.11px;top:957.80px;font-family:'Liberation Sans';font-size:15px;font-weight:400;color:#cfcfcf;">Доски сообщений</div><div class="t" style="left:1154.14px;top:957.80px;font-family:'Liberation Sans';font-size:15px;font-weight:400;color:#cfcfcf;">Данные конференции</div><div class="t" style="left:1330.20px;top:957.80px;font-family:'Liberation Sans';font-size:15px;font-weight:400;color:#cfcfcf;">Пауза/остановить запись</div><div class="t" style="left:1531.02px;top:957.80px;font-family:'Liberation Sans';font-size:15px;font-weight:400;color:#cfcfcf;">Дополнительно</div>
</body></html>
